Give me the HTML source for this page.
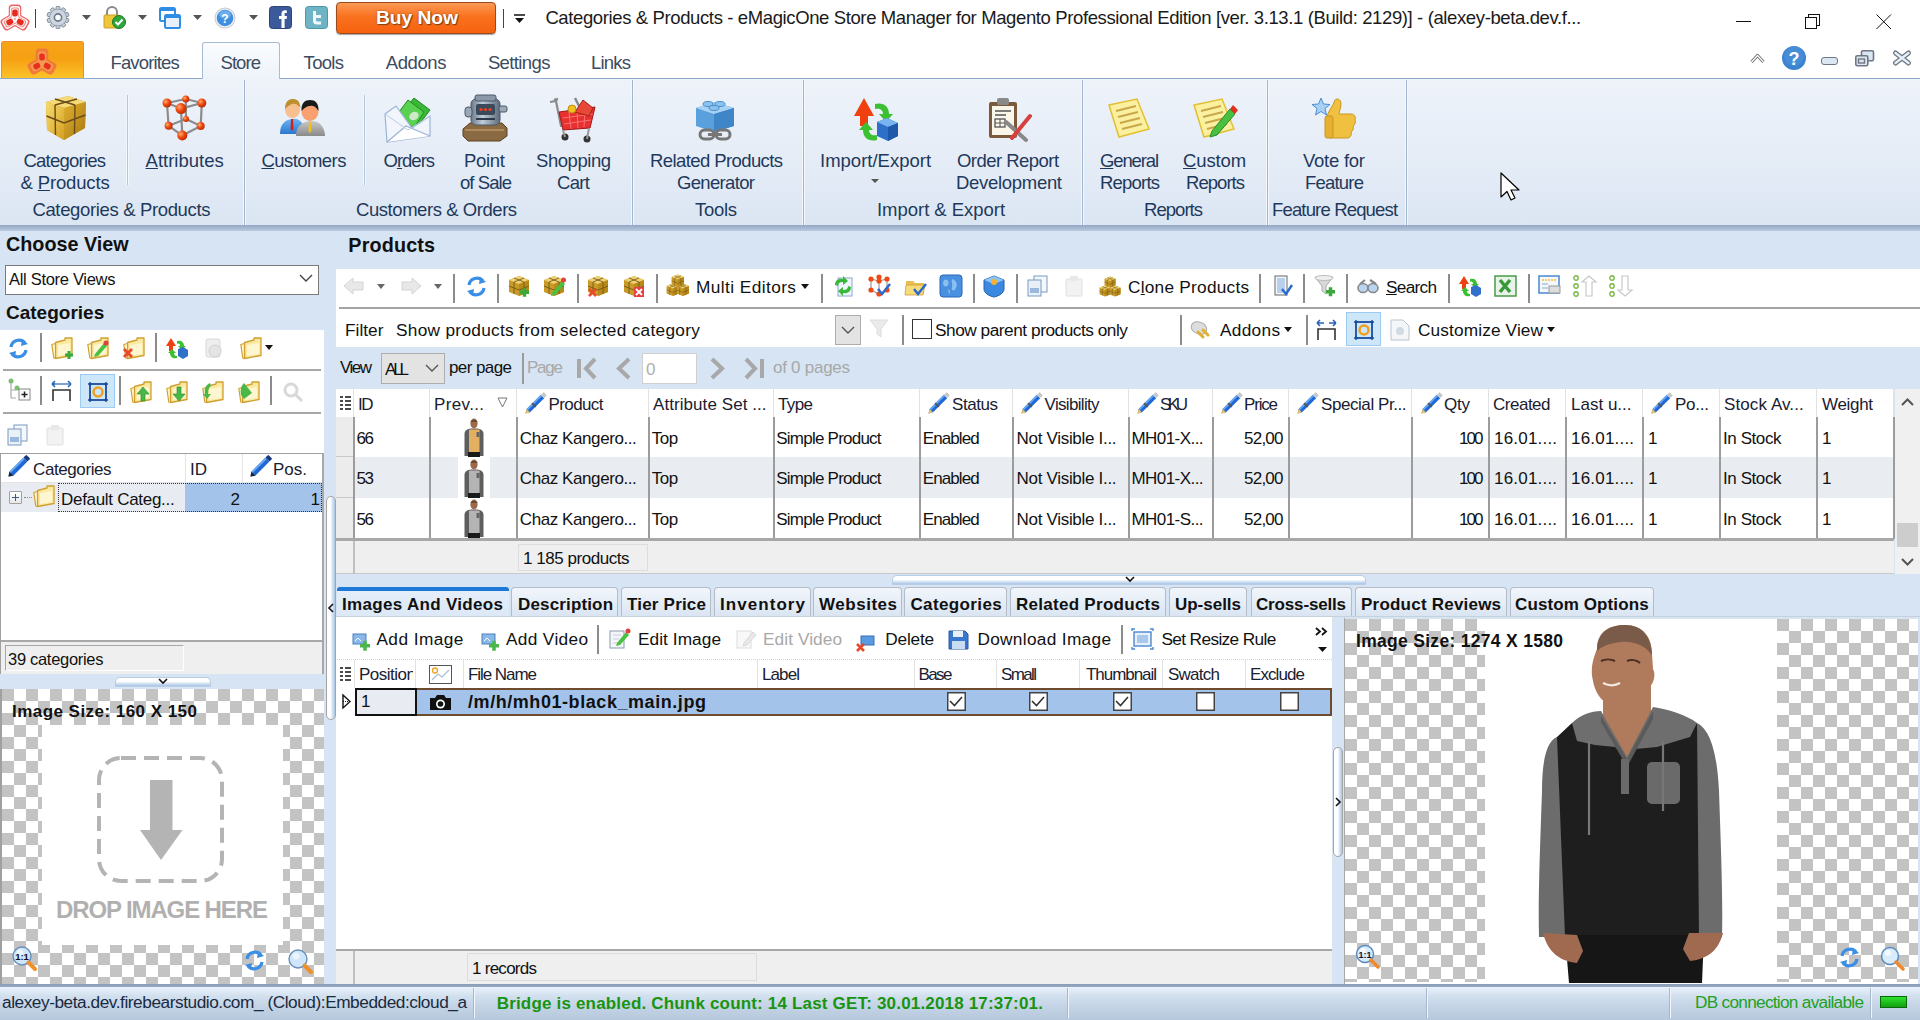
<!DOCTYPE html>
<html><head><meta charset="utf-8">
<style>
*{box-sizing:border-box;margin:0;padding:0}
html,body{width:1920px;height:1020px;overflow:hidden;background:#d6e4f3;font-family:"Liberation Sans",sans-serif;color:#000;position:relative}
.a{position:absolute}
.t{position:absolute;white-space:nowrap;line-height:1}
svg{position:absolute;overflow:visible}
.rt{color:#1e395b}

</style></head>
<body>

<!-- p01_title.py -->
<div class="a " style="left:0px;top:0px;width:1920px;height:40px;background:#fff"></div>
<svg style="left:0px;top:2px" width="30" height="30" viewBox="0 0 30 30"><g transform="translate(15,17)"><rect x="-6.25" y="-14.5" width="12.5" height="17.0" rx="3.5" fill="#ec6464" transform="rotate(0)"/><rect x="-6.25" y="-14.5" width="12.5" height="17.0" rx="3.5" fill="#ec6464" transform="rotate(120)"/><rect x="-6.25" y="-14.5" width="12.5" height="17.0" rx="3.5" fill="#ec6464" transform="rotate(240)"/><rect x="-5.1" y="-13" width="10.2" height="14.2" rx="3" fill="#fff" transform="rotate(0)"/><rect x="-5.1" y="-13" width="10.2" height="14.2" rx="3" fill="#fff" transform="rotate(120)"/><rect x="-5.1" y="-13" width="10.2" height="14.2" rx="3" fill="#fff" transform="rotate(240)"/><rect x="-4.1" y="-11.6" width="8.2" height="11.799999999999999" rx="2.5" fill="#f08c8c" transform="rotate(0)"/><rect x="-4.1" y="-11.6" width="8.2" height="11.799999999999999" rx="2.5" fill="#f08c8c" transform="rotate(120)"/><rect x="-4.1" y="-11.6" width="8.2" height="11.799999999999999" rx="2.5" fill="#f08c8c" transform="rotate(240)"/><rect x="-3.3" y="-10.4" width="6.6" height="9.6" rx="2" fill="#fff" transform="rotate(0)"/><rect x="-3.3" y="-10.4" width="6.6" height="9.6" rx="2" fill="#fff" transform="rotate(120)"/><rect x="-3.3" y="-10.4" width="6.6" height="9.6" rx="2" fill="#fff" transform="rotate(240)"/><rect x="-2.8" y="-9.5" width="5.6" height="6.9" rx="2" fill="#e62a1e" transform="rotate(0)"/><rect x="-2.8" y="-9.5" width="5.6" height="6.9" rx="2" fill="#e62a1e" transform="rotate(120)"/><rect x="-2.8" y="-9.5" width="5.6" height="6.9" rx="2" fill="#e62a1e" transform="rotate(240)"/></g></svg>
<div class="a " style="left:35px;top:9px;width:1px;height:19px;background:#444"></div>
<svg style="left:47px;top:6px" width="22" height="23" viewBox="0 0 22 23"><g transform="translate(11,11.5)"><g fill="#c4ced8" stroke="#7d8a98" stroke-width="0.9"><rect x="-2" y="-11" width="4" height="5.5" rx="0.8" transform="rotate(0)"/><rect x="-2" y="-11" width="4" height="5.5" rx="0.8" transform="rotate(36)"/><rect x="-2" y="-11" width="4" height="5.5" rx="0.8" transform="rotate(72)"/><rect x="-2" y="-11" width="4" height="5.5" rx="0.8" transform="rotate(108)"/><rect x="-2" y="-11" width="4" height="5.5" rx="0.8" transform="rotate(144)"/><rect x="-2" y="-11" width="4" height="5.5" rx="0.8" transform="rotate(180)"/><rect x="-2" y="-11" width="4" height="5.5" rx="0.8" transform="rotate(216)"/><rect x="-2" y="-11" width="4" height="5.5" rx="0.8" transform="rotate(252)"/><rect x="-2" y="-11" width="4" height="5.5" rx="0.8" transform="rotate(288)"/><rect x="-2" y="-11" width="4" height="5.5" rx="0.8" transform="rotate(324)"/><circle r="8.2"/></g><circle r="8" fill="#cdd6e0"/><circle r="3.6" fill="#fff" stroke="#6a7888" stroke-width="1.6"/></g></svg>
<svg style="left:82px;top:15px" width="9" height="5" viewBox="0 0 9 5"><path d="M0 0H9L4.5 5Z" fill="#555"/></svg>
<svg style="left:103px;top:6px" width="23" height="23" viewBox="0 0 23 23"><path d="M4 9V6a5 5 0 0 1 10 0v3" fill="none" stroke="#8a8a8a" stroke-width="2"/><rect x="1" y="9" width="15" height="13" rx="1" fill="#f0c53a" stroke="#caa02a"/><circle cx="16" cy="16" r="6.5" fill="#2fa63a" stroke="#1d7a26"/><path d="M12.5 16l2.5 2.5 4.5-5" fill="none" stroke="#fff" stroke-width="2"/></svg>
<svg style="left:138px;top:15px" width="9" height="5" viewBox="0 0 9 5"><path d="M0 0H9L4.5 5Z" fill="#555"/></svg>
<svg style="left:159px;top:7px" width="22" height="22" viewBox="0 0 22 22"><rect x="1" y="1" width="15" height="13" rx="1.5" fill="#fff" stroke="#2f8de4" stroke-width="2"/><rect x="1" y="1" width="15" height="3" fill="#2f8de4"/><rect x="6" y="8" width="15" height="13" rx="1.5" fill="#e8f1fb" stroke="#2f8de4" stroke-width="2"/><rect x="6" y="8" width="15" height="3" fill="#2f8de4"/></svg>
<svg style="left:193px;top:15px" width="9" height="5" viewBox="0 0 9 5"><path d="M0 0H9L4.5 5Z" fill="#555"/></svg>
<svg style="left:214px;top:7px" width="22" height="22" viewBox="0 0 22 22"><circle cx="11" cy="11" r="10.5" fill="#c8ccd2"/><circle cx="11" cy="11" r="9.5" fill="#eef0f2"/><circle cx="11" cy="11" r="8.3" fill="#3f8ee0"/><ellipse cx="11" cy="7.5" rx="6" ry="4" fill="#8cc0f4" opacity="0.6"/><text x="11" y="15.5" font-size="12" font-weight="bold" fill="#fff" text-anchor="middle" font-family="Liberation Sans">?</text></svg>
<svg style="left:249px;top:15px" width="9" height="5" viewBox="0 0 9 5"><path d="M0 0H9L4.5 5Z" fill="#555"/></svg>
<svg style="left:269px;top:6px" width="23" height="23" viewBox="0 0 23 23"><rect x="0.5" y="0.5" width="22" height="22" rx="3" fill="#3b5a9a" stroke="#2c4477"/><path d="M12.5 22V13H10V10H12.5V7.8C12.5 5.5 13.8 4.3 15.9 4.3C16.9 4.3 17.6 4.4 17.8 4.4V7H16.3C15.3 7 15.6 7.6 15.6 8.3V10H18L17.6 13H15.6V22Z" fill="#fff"/></svg>
<svg style="left:305px;top:6px" width="23" height="23" viewBox="0 0 23 23"><rect x="0.5" y="0.5" width="22" height="22" rx="3" fill="#6fb4c4" stroke="#4d98a8"/><path d="M8 5V15C8 17.5 9.5 18.5 12 18.5H16V15.5H12C11.3 15.5 11 15 11 14.3V12H16V9H11V5Z" fill="#fff" opacity="0.9"/></svg>
<div class="a " style="left:336px;top:2px;width:160px;height:32px;background:linear-gradient(#fb9a55,#f9721f 45%,#f6620f);border:1px solid #9a4a1c;border-radius:4px;box-shadow:0 1px 1px rgba(0,0,0,0.35)"></div>
<div class="t " style="left:376.0px;top:8.2px;font-size:19.25px;font-weight:bold;color:#fff;letter-spacing:-0.06px;text-shadow:0 0 2px #9a4a10,1px 1px 1px #7a3a10;">Buy Now</div>
<div class="a " style="left:503px;top:9px;width:1px;height:19px;background:#444"></div>
<svg style="left:514px;top:15px" width="11" height="8" viewBox="0 0 11 8"><path d="M0 0H11" stroke="#111" stroke-width="1.5"/><path d="M1 3H10L5.5 8Z" fill="#111"/></svg>
<div class="t " style="left:545.4px;top:9.3px;font-size:18.50px;color:#1a1a1a;letter-spacing:-0.38px;">Categories &amp; Products - eMagicOne Store Manager for Magento Professional Edition [ver. 3.13.1 (Build: 2129)] - (alexey-beta.dev.f...</div>
<div class="a " style="left:1736px;top:21px;width:15px;height:1px;background:#111"></div>
<svg style="left:1805px;top:14px" width="16" height="16" viewBox="0 0 16 16"><rect x="3.5" y="0.5" width="11" height="11" fill="none" stroke="#111"/><rect x="0.5" y="3.5" width="11" height="11" fill="#fff" stroke="#111"/></svg>
<svg style="left:1876px;top:14px" width="16" height="16" viewBox="0 0 16 16"><path d="M0.5 0.5L15 15M15 0.5L0.5 15" stroke="#111" stroke-width="1"/></svg>

<!-- p02_tabs.py -->
<div class="a " style="left:0px;top:40px;width:1920px;height:39px;background:#fff"></div>
<div class="a " style="left:1px;top:41px;width:83px;height:38px;background:linear-gradient(#f7a31a,#f6a012 45%,#fcc52a);border:1px solid #f08a2a;border-bottom:none;border-radius:3px 3px 0 0"></div>
<svg style="left:27px;top:46px" width="30" height="30" viewBox="0 0 30 30"><g transform="translate(15,17)"><rect x="-6.25" y="-14.5" width="12.5" height="17.0" rx="3.5" fill="#f07a3a" transform="rotate(0)"/><rect x="-6.25" y="-14.5" width="12.5" height="17.0" rx="3.5" fill="#f07a3a" transform="rotate(120)"/><rect x="-6.25" y="-14.5" width="12.5" height="17.0" rx="3.5" fill="#f07a3a" transform="rotate(240)"/><rect x="-4.1" y="-11.6" width="8.2" height="11.799999999999999" rx="2.5" fill="#f59a50" transform="rotate(0)"/><rect x="-4.1" y="-11.6" width="8.2" height="11.799999999999999" rx="2.5" fill="#f59a50" transform="rotate(120)"/><rect x="-4.1" y="-11.6" width="8.2" height="11.799999999999999" rx="2.5" fill="#f59a50" transform="rotate(240)"/><rect x="-2.8" y="-9.5" width="5.6" height="6.9" rx="2" fill="#e8301e" transform="rotate(0)"/><rect x="-2.8" y="-9.5" width="5.6" height="6.9" rx="2" fill="#e8301e" transform="rotate(120)"/><rect x="-2.8" y="-9.5" width="5.6" height="6.9" rx="2" fill="#e8301e" transform="rotate(240)"/></g></svg>
<div class="a " style="left:0px;top:78px;width:1920px;height:1px;background:#8fa9cc"></div>
<div class="a " style="left:202px;top:42px;width:78px;height:37px;background:linear-gradient(#fafcfe,#eef3fa);border:1px solid #a8bcd6;border-bottom:none;border-radius:3px 3px 0 0"></div>
<div class="t " style="left:110.5px;top:54.3px;font-size:18.50px;color:#3c4b5f;letter-spacing:-0.86px;">Favorites</div>
<div class="t " style="left:220.5px;top:54.3px;font-size:18.50px;color:#3c4b5f;letter-spacing:-0.93px;">Store</div>
<div class="t " style="left:303.6px;top:54.3px;font-size:18.50px;color:#3c4b5f;letter-spacing:-0.69px;">Tools</div>
<div class="t " style="left:385.7px;top:54.3px;font-size:18.50px;color:#3c4b5f;letter-spacing:-0.38px;">Addons</div>
<div class="t " style="left:487.9px;top:54.3px;font-size:18.50px;color:#3c4b5f;letter-spacing:-0.62px;">Settings</div>
<div class="t " style="left:591.0px;top:54.3px;font-size:18.50px;color:#3c4b5f;letter-spacing:-0.79px;">Links</div>
<svg style="left:1750px;top:52px" width="15" height="12" viewBox="0 0 15 12"><path d="M1.5 10L7.5 3.5L13.5 10" fill="none" stroke="#6b6b6b" stroke-width="3.2" stroke-linejoin="round"/><path d="M1.5 10L7.5 3.5L13.5 10" fill="none" stroke="#fff" stroke-width="1.2" stroke-linejoin="round"/></svg>
<svg style="left:1782px;top:46px" width="24" height="24" viewBox="0 0 24 24"><circle cx="12" cy="12" r="12" fill="#3b82cf"/><circle cx="12" cy="10" r="10" fill="#4f95dc" opacity="0.6"/><text x="12" y="19" font-size="18" font-weight="bold" fill="#fff" text-anchor="middle" font-family="Liberation Sans">?</text></svg>
<div class="a " style="left:1821px;top:57px;width:17px;height:8px;background:#dbe6f3;border:1.5px solid #6f7782;border-radius:3px"></div>
<svg style="left:1855px;top:50px" width="20" height="17" viewBox="0 0 20 17"><rect x="6.5" y="0.8" width="12" height="10" rx="1.5" fill="#dbe6f3" stroke="#6f7782" stroke-width="1.6"/><rect x="0.8" y="5.8" width="12" height="10" rx="1.5" fill="#dbe6f3" stroke="#6f7782" stroke-width="1.6"/><rect x="3.5" y="9" width="6" height="4" fill="none" stroke="#6f7782" stroke-width="1.4"/></svg>
<svg style="left:1893px;top:51px" width="18" height="14" viewBox="0 0 18 14"><path d="M2.5 2L15.5 12M15.5 2L2.5 12" stroke="#6f7782" stroke-width="5" stroke-linecap="round"/><path d="M2.5 2L15.5 12M15.5 2L2.5 12" stroke="#e6eef7" stroke-width="2.4" stroke-linecap="round"/></svg>

<!-- p03_ribbon.py -->
<div class="a " style="left:0px;top:79px;width:1920px;height:146px;background:linear-gradient(#eef3fa,#e6edf7 50%,#dbe6f3)"></div>
<div class="a " style="left:0px;top:225px;width:1920px;height:6px;background:linear-gradient(#93a7c3,#b9cadf)"></div>
<div class="a " style="left:243px;top:80px;width:3px;height:145px;background:linear-gradient(90deg,#f4f8fc 0,#f4f8fc 1px,#a3b5cd 1px,#a3b5cd 2px,#f4f8fc 2px)"></div>
<div class="a " style="left:631px;top:80px;width:3px;height:145px;background:linear-gradient(90deg,#f4f8fc 0,#f4f8fc 1px,#a3b5cd 1px,#a3b5cd 2px,#f4f8fc 2px)"></div>
<div class="a " style="left:802px;top:80px;width:3px;height:145px;background:linear-gradient(90deg,#f4f8fc 0,#f4f8fc 1px,#a3b5cd 1px,#a3b5cd 2px,#f4f8fc 2px)"></div>
<div class="a " style="left:1081px;top:80px;width:3px;height:145px;background:linear-gradient(90deg,#f4f8fc 0,#f4f8fc 1px,#a3b5cd 1px,#a3b5cd 2px,#f4f8fc 2px)"></div>
<div class="a " style="left:1266px;top:80px;width:3px;height:145px;background:linear-gradient(90deg,#f4f8fc 0,#f4f8fc 1px,#a3b5cd 1px,#a3b5cd 2px,#f4f8fc 2px)"></div>
<div class="a " style="left:1405px;top:80px;width:3px;height:145px;background:linear-gradient(90deg,#f4f8fc 0,#f4f8fc 1px,#a3b5cd 1px,#a3b5cd 2px,#f4f8fc 2px)"></div>
<div class="a " style="left:126px;top:95px;width:3px;height:90px;background:linear-gradient(90deg,#f4f8fc 0,#f4f8fc 1px,#b6c6da 1px,#b6c6da 2px,#f4f8fc 2px)"></div>
<div class="a " style="left:363px;top:95px;width:3px;height:90px;background:linear-gradient(90deg,#f4f8fc 0,#f4f8fc 1px,#b6c6da 1px,#b6c6da 2px,#f4f8fc 2px)"></div>
<svg style="left:42px;top:94px" width="46" height="46" viewBox="0 0 46 46"><defs><linearGradient id="cg1" x1="0" y1="0" x2="1" y2="1"><stop offset="0" stop-color="#f8dc70"/><stop offset="1" stop-color="#d4a020"/></linearGradient><linearGradient id="cg2" x1="0" y1="0" x2="1" y2="1"><stop offset="0" stop-color="#e0b030"/><stop offset="1" stop-color="#a87810"/></linearGradient></defs><path d="M4 8L26 2L44 8L43 34L22 46L5 36Z" fill="#c89a1c"/><path d="M4 8L22 14L44 8L26 2Z" fill="#f6da78"/><path d="M4 8L22 14V46L5 36Z" fill="url(#cg1)"/><path d="M22 14L44 8L43 34L22 46Z" fill="url(#cg2)"/><path d="M13 5L33 11M35 5L13 11M13 11L13.5 41M33 11L32.5 40M4.5 22L22 29L43.5 21" stroke="#6a4c18" stroke-width="1.4" fill="none"/></svg>
<div class="t " style="left:23.5px;top:151.9px;font-size:18.50px;color:#1e395b;letter-spacing:-0.77px;">Categories</div>
<div class="t " style="left:20.6px;top:173.9px;font-size:18.50px;color:#1e395b;letter-spacing:-0.16px;">&amp; <u>P</u>roducts</div>
<svg style="left:161px;top:95px" width="46" height="46" viewBox="0 0 46 46"><defs><radialGradient id="ag" cx="0.35" cy="0.35" r="0.7"><stop offset="0" stop-color="#ffb070"/><stop offset="0.5" stop-color="#f04a12"/><stop offset="1" stop-color="#b82a00"/></radialGradient></defs><g stroke="#8c8c8c" stroke-width="2.2"><path d="M6 8L24.8 4"/><path d="M24.8 4L40.8 8"/><path d="M40.8 8L20 13.6"/><path d="M20 13.6L6 8"/><path d="M6 8L7.6 30.8"/><path d="M40.8 8L39.7 31"/><path d="M20 13.6L21.3 40.5"/><path d="M24.8 4L25 24"/><path d="M7.6 30.8L25 24"/><path d="M25 24L39.7 31"/><path d="M39.7 31L21.3 40.5"/><path d="M21.3 40.5L7.6 30.8"/></g><circle cx="24.8" cy="4" r="3.5" fill="url(#ag)"/><circle cx="25" cy="24" r="3" fill="url(#ag)"/><circle cx="6" cy="8" r="4.5" fill="url(#ag)"/><circle cx="40.8" cy="8" r="4.5" fill="url(#ag)"/><circle cx="7.6" cy="30.8" r="4" fill="url(#ag)"/><circle cx="39.7" cy="31" r="4" fill="url(#ag)"/><circle cx="20" cy="13.6" r="5.5" fill="url(#ag)"/><circle cx="21.3" cy="40.5" r="5" fill="url(#ag)"/></svg>
<div class="t " style="left:145.6px;top:151.9px;font-size:18.50px;color:#1e395b;letter-spacing:-0.01px;"><u>A</u>ttributes</div>
<svg style="left:280px;top:98px" width="46" height="46" viewBox="0 0 46 46"><defs><linearGradient id="cb1" x1="0" y1="0" x2="0" y2="1"><stop offset="0" stop-color="#6ab4f4"/><stop offset="1" stop-color="#2a78d0"/></linearGradient><linearGradient id="cb2" x1="0" y1="0" x2="0" y2="1"><stop offset="0" stop-color="#c8c8c8"/><stop offset="1" stop-color="#8a8a8a"/></linearGradient></defs><path d="M0 36C0 26 5 22 12 21S24 24 25 36Z" fill="url(#cb1)"/><path d="M11 21L13 21L13.5 31L12 33L10.5 31Z" fill="#d02020"/><ellipse cx="12.5" cy="12" rx="7.5" ry="8" fill="#f8c090"/><path d="M5 11C5 3 9 1 13 1S20 3 20.5 10C18 6 14 5 12 6C9 7 7 9 5 11Z" fill="#c09030"/><path d="M16 38C16 28 22 24 30 23S45 28 45 38Z" fill="url(#cb2)"/><path d="M29 24L31 24L31.5 33L30 35L28.5 33Z" fill="#f0c020"/><ellipse cx="30" cy="14" rx="8.5" ry="9" fill="#f8a070"/><path d="M21.5 13C21 5 25 2 30 2S39 5 38.5 13C36 8 32 7 30 8C27 8 24 10 21.5 13Z" fill="#1a1a1a"/></svg>
<div class="t " style="left:261.4px;top:151.9px;font-size:18.50px;color:#1e395b;letter-spacing:-0.55px;"><u>C</u>ustomers</div>
<svg style="left:384px;top:96px" width="46" height="46" viewBox="0 0 46 46"><path d="M16 18L30 2L46 14L34 30Z" fill="#3ab838" stroke="#1f8a1f"/><path d="M12 20L24 4L40 16L30 32Z" fill="#58d050" stroke="#1f8a1f"/><ellipse cx="30" cy="20" rx="5" ry="4" fill="#cfe8c8" transform="rotate(-35 30 20)"/><path d="M1 18L12 10L28 32L46 20L46 40L3 46Z" fill="#f2f6fc" stroke="#9ab4d8" stroke-width="1.2"/><path d="M3 46L22 30L46 40" fill="#fff" stroke="#9ab4d8" stroke-width="1.2"/><path d="M1 18L24 34L46 20" fill="none" stroke="#b8cce4"/></svg>
<div class="t " style="left:383.5px;top:151.9px;font-size:18.50px;color:#1e395b;letter-spacing:-1.00px;">O<u>r</u>ders</div>
<svg style="left:462px;top:94px" width="46" height="46" viewBox="0 0 46 46"><defs><linearGradient id="pg" x1="0" y1="0" x2="1" y2="0"><stop offset="0" stop-color="#6a7888"/><stop offset="0.4" stop-color="#c0ccd8"/><stop offset="1" stop-color="#5a6878"/></linearGradient></defs><path d="M1 35L8 29H40L45 34V42L38 47H6L1 42Z" fill="#8a6a42" stroke="#5a4020"/><path d="M3 36H42" stroke="#b08a5a" stroke-width="2"/><rect x="9" y="5" width="29" height="26" rx="5" fill="url(#pg)" stroke="#4a5868"/><rect x="13" y="1" width="21" height="6" rx="2" fill="#8a98a8" stroke="#4a5868"/><rect x="14" y="10" width="19" height="11" rx="2" fill="#3a4a5a"/><circle cx="19" cy="15.5" r="1.6" fill="#f04020"/><circle cx="23.5" cy="15.5" r="1.6" fill="#f04020"/><circle cx="28" cy="15.5" r="1.6" fill="#f04020"/><rect x="3" y="13" width="7" height="10" rx="3" fill="#9aa8b8" stroke="#4a5868"/><rect x="37" y="12" width="8" height="6" rx="2" fill="#9aa8b8" stroke="#4a5868"/><path d="M14 25H33" stroke="#2a3a4a" stroke-width="2"/></svg>
<div class="t " style="left:464.0px;top:151.9px;font-size:18.50px;color:#1e395b;letter-spacing:-0.29px;">Point</div>
<div class="t " style="left:460.0px;top:173.9px;font-size:18.50px;color:#1e395b;letter-spacing:-0.93px;">of Sale</div>
<svg style="left:549px;top:96px" width="46" height="46" viewBox="0 0 46 46"><path d="M1 6L7 5L12 30L40 30" fill="none" stroke="#8a8a8a" stroke-width="2.2"/><path d="M5 4L9 3M26 2L30 10" stroke="#8a8a8a" stroke-width="2.5"/><path d="M10 16L46 11L41 32L14 34Z" fill="#e83030" stroke="#a01818"/><path d="M14 22L44 18M15 28L42 24M20 16L22 33M28 14L29 32M36 13L35 31" stroke="#ff8080" stroke-width="0.8"/><path d="M26 16L34 4L44 12L40 20Z" fill="#e84838" stroke="#a82010"/><circle cx="23" cy="13" r="4" fill="#f0c020" stroke="#c09010"/><circle cx="16" cy="41" r="3.5" fill="#333"/><circle cx="38" cy="43" r="3.5" fill="#333"/><path d="M14 34L16 41M40 32L38 43" stroke="#999" stroke-width="2"/></svg>
<div class="t " style="left:536.0px;top:151.9px;font-size:18.50px;color:#1e395b;letter-spacing:-0.45px;">Shopping</div>
<div class="t " style="left:557.0px;top:173.9px;font-size:18.50px;color:#1e395b;letter-spacing:-0.65px;">Cart</div>
<svg style="left:692px;top:96px" width="46" height="46" viewBox="0 0 46 46"><path d="M4 12L22 6L42 12V30L22 36L4 30Z" fill="#5aa0dc"/><path d="M4 12L22 18L42 12L22 6Z" fill="#a8d2f4"/><path d="M22 18V36L42 30V12Z" fill="#3f86c8"/><ellipse cx="16" cy="8" rx="5" ry="2.5" fill="#8cc2ee" stroke="#4a90d0"/><ellipse cx="28" cy="8" rx="5" ry="2.5" fill="#8cc2ee" stroke="#4a90d0"/><ellipse cx="22" cy="12" rx="5" ry="2.5" fill="#8cc2ee" stroke="#4a90d0"/><rect x="8" y="34" width="14" height="9" rx="4.5" fill="none" stroke="#777" stroke-width="3"/><rect x="24" y="34" width="14" height="9" rx="4.5" fill="none" stroke="#777" stroke-width="3"/><path d="M16 38.5H30" stroke="#777" stroke-width="3"/></svg>
<div class="t " style="left:650.0px;top:151.9px;font-size:18.50px;color:#1e395b;letter-spacing:-0.59px;">Related Products</div>
<div class="t " style="left:677.0px;top:173.9px;font-size:18.50px;color:#1e395b;letter-spacing:-0.66px;">Generator</div>
<svg style="left:853px;top:96px" width="46" height="46" viewBox="0 0 46 46"><path d="M10 0L20 18H14V28H6V18H0Z" fill="#f04010" transform="translate(1,2)"/><path d="M22 8C30 6 36 10 36 18L40 18L33 26L26 18H30C30 14 27 12 22 13Z" fill="#3ac030"/><path d="M24 44C16 46 10 42 10 34L6 34L13 26L20 34H16C16 38 19 40 24 39Z" fill="#3ac030"/><path d="M24 26L34 22L45 27V40L35 45L24 40Z" fill="#2e6fc8"/><path d="M24 26L35 31L45 27L34 22Z" fill="#7ab4f0"/><path d="M35 31V45L45 40V27Z" fill="#1e58a8"/></svg>
<div class="t " style="left:820.0px;top:151.9px;font-size:18.50px;color:#1e395b;letter-spacing:0.00px;">Import/Export</div>
<svg style="left:871px;top:179px" width="8" height="4" viewBox="0 0 8 4"><path d="M0 0H8L4 4Z" fill="#555"/></svg>
<svg style="left:986px;top:96px" width="46" height="46" viewBox="0 0 46 46"><rect x="3" y="6" width="28" height="36" rx="2" fill="#7a5a3a"/><rect x="6" y="10" width="22" height="29" fill="#fbf6ea"/><rect x="11" y="2" width="12" height="7" rx="2" fill="#8a8a8a"/><path d="M9 15H25M9 19H20" stroke="#555" stroke-width="1.3"/><rect x="9" y="23" width="10" height="8" fill="none" stroke="#555" stroke-width="1.3"/><path d="M9 27H19M14 23V31" stroke="#555" stroke-width="1"/><path d="M20 26L40 44" stroke="#888" stroke-width="4" stroke-linecap="round"/><path d="M26 42L44 20" stroke="#d84040" stroke-width="4" stroke-linecap="round"/></svg>
<div class="t " style="left:957.0px;top:151.9px;font-size:18.50px;color:#1e395b;letter-spacing:-0.54px;">Order Report</div>
<div class="t " style="left:956.0px;top:173.9px;font-size:18.50px;color:#1e395b;letter-spacing:-0.30px;">Development</div>
<svg style="left:1107px;top:97px" width="46" height="46" viewBox="0 0 46 46"><path d="M2 8L30 2L42 32L12 40Z" fill="#fbf0a0" stroke="#e2c030" stroke-width="1.5"/><path d="M9 14L29 9M11 20L31 15M13 26L33 21M15 32L35 27" stroke="#c8a84a" stroke-width="2"/></svg>
<div class="t " style="left:1100.0px;top:151.9px;font-size:18.50px;color:#1e395b;letter-spacing:-1.13px;"><u>G</u>eneral</div>
<div class="t " style="left:1100.0px;top:173.9px;font-size:18.50px;color:#1e395b;letter-spacing:-0.79px;">Reports</div>
<svg style="left:1192px;top:97px" width="46" height="46" viewBox="0 0 46 46"><path d="M2 8L30 2L42 32L12 40Z" fill="#fbf0a0" stroke="#e2c030" stroke-width="1.5"/><path d="M9 14L29 9M11 20L31 15M13 26L33 21M15 32L35 27" stroke="#c8a84a" stroke-width="2"/><path d="M20 34L38 12L43 17L25 38L18 40Z" fill="#4ac040" stroke="#2a8a2a"/><path d="M38 12L41 8L46 13L43 17Z" fill="#e03020"/></svg>
<div class="t " style="left:1183.0px;top:151.9px;font-size:18.50px;color:#1e395b;letter-spacing:-0.14px;"><u>C</u>ustom</div>
<div class="t " style="left:1186.0px;top:173.9px;font-size:18.50px;color:#1e395b;letter-spacing:-0.96px;">Reports</div>
<svg style="left:1311px;top:96px" width="46" height="46" viewBox="0 0 46 46"><path d="M16 20C18 14 22 10 24 4C26 2 30 3 30 8C30 12 28 16 28 18H40C44 18 45 22 44 24C45 26 44 29 42 30C43 32 42 35 40 36C41 38 40 41 37 42H20C17 42 16 40 16 38Z" fill="#f0c040" stroke="#c89820"/><rect x="14" y="20" width="8" height="22" rx="2" fill="#e8b030" stroke="#c89820"/><path d="M10 2L12.5 8L19 8.5L14 12.5L15.5 19L10 15.5L4.5 19L6 12.5L1 8.5L7.5 8Z" fill="#a8d0f4" stroke="#4a90d0"/></svg>
<div class="t " style="left:1303.0px;top:151.9px;font-size:18.50px;color:#1e395b;letter-spacing:-0.25px;">Vote for</div>
<div class="t " style="left:1305.0px;top:173.9px;font-size:18.50px;color:#1e395b;letter-spacing:-0.79px;">Feature</div>
<div class="t " style="left:32.4px;top:201.3px;font-size:18.50px;color:#1e395b;letter-spacing:-0.35px;">Categories &amp; Products</div>
<div class="t " style="left:356.0px;top:201.3px;font-size:18.50px;color:#1e395b;letter-spacing:-0.44px;">Customers &amp; Orders</div>
<div class="t " style="left:695.0px;top:201.3px;font-size:18.50px;color:#1e395b;letter-spacing:-0.29px;">Tools</div>
<div class="t " style="left:877.0px;top:201.3px;font-size:18.50px;color:#1e395b;letter-spacing:-0.03px;">Import &amp; Export</div>
<div class="t " style="left:1144.0px;top:201.3px;font-size:18.50px;color:#1e395b;letter-spacing:-0.96px;">Reports</div>
<div class="t " style="left:1272.0px;top:201.3px;font-size:18.50px;color:#1e395b;letter-spacing:-0.84px;">Feature Request</div>
<svg style="left:1500px;top:172px" width="20" height="30" viewBox="0 0 20 30"><path d="M1 1V25L7 19.5L11 28L15 26L11 18H19Z" fill="#fff" stroke="#000" stroke-width="1.2" stroke-linejoin="round"/></svg>

<!-- p04_left.py -->
<div class="t " style="left:6.0px;top:235.3px;font-size:19.75px;font-weight:bold;color:#111;">Choose View</div>
<div class="a " style="left:5px;top:265px;width:314px;height:30px;background:#fff;border:1px solid #7a7a7a"></div>
<div class="t " style="left:9.0px;top:270.5px;font-size:16.50px;color:#111;letter-spacing:-0.30px;">All Store Views</div>
<svg style="left:299px;top:274px" width="14" height="8" viewBox="0 0 14 8"><path d="M1 1L7 7L13 1" fill="none" stroke="#444" stroke-width="1.4"/></svg>
<div class="t " style="left:6.0px;top:302.9px;font-size:19.00px;font-weight:bold;color:#111;">Categories</div>
<div class="a " style="left:0px;top:330px;width:324px;height:124px;background:#fff"></div>
<div class="a " style="left:3px;top:369px;width:318px;height:2px;background:#a8a8a8"></div>
<div class="a " style="left:3px;top:412px;width:318px;height:2px;background:#a8a8a8"></div>
<div class="a " style="left:40px;top:333px;width:2px;height:29px;background:#8a8a8a"></div>
<div class="a " style="left:155px;top:333px;width:2px;height:29px;background:#8a8a8a"></div>
<div class="a " style="left:40px;top:376px;width:2px;height:29px;background:#8a8a8a"></div>
<div class="a " style="left:119px;top:376px;width:2px;height:29px;background:#8a8a8a"></div>
<div class="a " style="left:270px;top:376px;width:2px;height:29px;background:#8a8a8a"></div>
<svg style="left:7px;top:337px" width="22" height="22" viewBox="0 0 22 22"><path d="M4 10A8 8 0 0 1 18 6" fill="none" stroke="#3a8ee6" stroke-width="3.2"/><path d="M15 2L21 7L14 9Z" fill="#3a8ee6"/><path d="M19 13A8 8 0 0 1 5 17" fill="none" stroke="#3a8ee6" stroke-width="3.2"/><path d="M8 21L2 16L9 14Z" fill="#3a8ee6"/></svg>
<svg style="left:51px;top:337px" width="22" height="22" viewBox="0 0 22 22"><path d="M4.5 5.5L14 3V1H21V18.5L4.5 21.5Z" fill="#fbe9a0" stroke="#d0a030" stroke-width="1.3" stroke-linejoin="round"/><path d="M7 8L19 6V17L7 19Z" fill="#fdf6d0"/><path d="M0.8 7.5L4.5 6.5V21.5L2.8 21Z" fill="#fff6d0" stroke="#d0a030" stroke-width="1.2" stroke-linejoin="round"/><rect x="14" y="16.5" width="8" height="3" fill="#3aa83a"/><rect x="16.5" y="14" width="3" height="8" fill="#3aa83a"/></svg>
<svg style="left:87px;top:337px" width="22" height="22" viewBox="0 0 22 22"><path d="M4.5 5.5L14 3V1H21V18.5L4.5 21.5Z" fill="#fbe9a0" stroke="#d0a030" stroke-width="1.3" stroke-linejoin="round"/><path d="M7 8L19 6V17L7 19Z" fill="#fdf6d0"/><path d="M0.8 7.5L4.5 6.5V21.5L2.8 21Z" fill="#fff6d0" stroke="#d0a030" stroke-width="1.2" stroke-linejoin="round"/><path d="M8 17L17 6L20 9L11 19L7 20Z" fill="#4ac040"/><circle cx="19" cy="6" r="2.5" fill="#e04040"/></svg>
<svg style="left:123px;top:337px" width="22" height="22" viewBox="0 0 22 22"><path d="M4.5 5.5L14 3V1H21V18.5L4.5 21.5Z" fill="#fbe9a0" stroke="#d0a030" stroke-width="1.3" stroke-linejoin="round"/><path d="M7 8L19 6V17L7 19Z" fill="#fdf6d0"/><path d="M0.8 7.5L4.5 6.5V21.5L2.8 21Z" fill="#fff6d0" stroke="#d0a030" stroke-width="1.2" stroke-linejoin="round"/><path d="M1 12L9 20M9 12L1 20" stroke="#e84a2a" stroke-width="3"/></svg>
<svg style="left:166px;top:337px" width="22" height="22" viewBox="0 0 22 22"><path d="M5 1L10 9H7V14H3V9H0Z" fill="#f04010"/><path d="M11 4C15 3 18 5 18 9L20 9L16 13L12 9H14C14 7 13 6 11 7Z" fill="#3ac030"/><path d="M11 21C7 22 4 20 4 16L2 16L6 12L10 16H8C8 18 9 19 11 19Z" fill="#3ac030"/><path d="M12 12L17 10L22 13V19L17 22L12 19Z" fill="#3070c8"/></svg>
<svg style="left:202px;top:337px" width="22" height="22" viewBox="0 0 22 22"><rect x="4" y="2" width="14" height="18" rx="2" fill="#eee" stroke="#d8d8d8"/><circle cx="13" cy="14" r="6" fill="#e4e4e4" stroke="#d0d0d0"/></svg>
<svg style="left:240px;top:337px" width="22" height="22" viewBox="0 0 22 22"><path d="M4.5 5.5L14 3V1H21V18.5L4.5 21.5Z" fill="#fbe9a0" stroke="#d0a030" stroke-width="1.3" stroke-linejoin="round"/><path d="M7 8L19 6V17L7 19Z" fill="#fdf6d0"/><path d="M0.8 7.5L4.5 6.5V21.5L2.8 21Z" fill="#fff6d0" stroke="#d0a030" stroke-width="1.2" stroke-linejoin="round"/></svg>
<svg style="left:265px;top:345px" width="8" height="5" viewBox="0 0 8 5"><path d="M0 0H8L4 5Z" fill="#111"/></svg>
<svg style="left:8px;top:378px" width="22" height="24" viewBox="0 0 22 24"><circle cx="3" cy="3" r="2.5" fill="#7ac070"/><path d="M3 5V20M3 12H8M3 20H8" stroke="#aaa" stroke-width="1.2"/><circle cx="9" cy="10" r="2.5" fill="#7ac070"/><rect x="11" y="11" width="11" height="11" fill="#fafafa" stroke="#888"/><path d="M13.5 16.5H19.5M16.5 13.5V19.5" stroke="#222" stroke-width="1.5"/></svg>
<svg style="left:51px;top:380px" width="21" height="22" viewBox="0 0 21 22"><path d="M1 4H20" stroke="#2a64b8" stroke-width="1.2" stroke-dasharray="0"/><path d="M4 4L1 4M1 4L4 1M1 4L4 7M20 4L17 1M20 4L17 7" stroke="#2a64b8" stroke-width="1.6" fill="none"/><path d="M2 21V10H19V21" fill="none" stroke="#333" stroke-width="1.6"/></svg>
<div class="a " style="left:80px;top:374px;width:35px;height:34px;background:#cde6f8;border:1px solid #9ccaf0"></div>
<svg style="left:88px;top:382px" width="20" height="20" viewBox="0 0 20 20"><rect x="2" y="2" width="16" height="16" fill="none" stroke="#1a4ca0" stroke-width="1.8"/><path d="M0 2H4M2 0V4M16 2H20M18 0V4M0 18H4M2 16V20M16 18H20M18 16V20" stroke="#1a4ca0" stroke-width="1.4"/><circle cx="10" cy="10" r="4.5" fill="none" stroke="#f0a020" stroke-width="2.5"/></svg>
<svg style="left:130px;top:381px" width="22" height="22" viewBox="0 0 22 22"><path d="M4.5 5.5L14 3V1H21V18.5L4.5 21.5Z" fill="#fbe9a0" stroke="#d0a030" stroke-width="1.3" stroke-linejoin="round"/><path d="M7 8L19 6V17L7 19Z" fill="#fdf6d0"/><path d="M0.8 7.5L4.5 6.5V21.5L2.8 21Z" fill="#fff6d0" stroke="#d0a030" stroke-width="1.2" stroke-linejoin="round"/><path d="M11 20V13H7L13 6L19 13H15V20Z" fill="#48b848" stroke="#2a8a2a" stroke-width="0.6"/></svg>
<svg style="left:166px;top:381px" width="22" height="22" viewBox="0 0 22 22"><path d="M4.5 5.5L14 3V1H21V18.5L4.5 21.5Z" fill="#fbe9a0" stroke="#d0a030" stroke-width="1.3" stroke-linejoin="round"/><path d="M7 8L19 6V17L7 19Z" fill="#fdf6d0"/><path d="M0.8 7.5L4.5 6.5V21.5L2.8 21Z" fill="#fff6d0" stroke="#d0a030" stroke-width="1.2" stroke-linejoin="round"/><path d="M11 6V13H7L13 20L19 13H15V6Z" fill="#48b848" stroke="#2a8a2a" stroke-width="0.6"/></svg>
<svg style="left:202px;top:381px" width="22" height="22" viewBox="0 0 22 22"><path d="M4.5 5.5L14 3V1H21V18.5L4.5 21.5Z" fill="#fbe9a0" stroke="#d0a030" stroke-width="1.3" stroke-linejoin="round"/><path d="M7 8L19 6V17L7 19Z" fill="#fdf6d0"/><path d="M0.8 7.5L4.5 6.5V21.5L2.8 21Z" fill="#fff6d0" stroke="#d0a030" stroke-width="1.2" stroke-linejoin="round"/><path d="M8 2C4 4 2 8 3 13L1 13L5 18L9 13H6C6 9 7 6 9 5Z" fill="#48b848"/></svg>
<svg style="left:238px;top:381px" width="22" height="22" viewBox="0 0 22 22"><path d="M4.5 5.5L14 3V1H21V18.5L4.5 21.5Z" fill="#fbe9a0" stroke="#d0a030" stroke-width="1.3" stroke-linejoin="round"/><path d="M7 8L19 6V17L7 19Z" fill="#fdf6d0"/><path d="M0.8 7.5L4.5 6.5V21.5L2.8 21Z" fill="#fff6d0" stroke="#d0a030" stroke-width="1.2" stroke-linejoin="round"/><path d="M6 2C3 5 2 9 3 14L6 18L14 12Z" fill="#48b848"/></svg>
<svg style="left:282px;top:381px" width="22" height="22" viewBox="0 0 22 22"><circle cx="9" cy="9" r="6" fill="none" stroke="#d8d8d8" stroke-width="3"/><path d="M13 13L20 20" stroke="#d8d8d8" stroke-width="3"/></svg>
<svg style="left:7px;top:424px" width="22" height="22" viewBox="0 0 22 22"><rect x="7" y="1" width="13" height="16" fill="#f4f8fc" stroke="#7a9ac0"/><rect x="1" y="5" width="13" height="16" fill="#e8f0f8" stroke="#7a9ac0"/><rect x="3" y="13" width="9" height="5" fill="#9ab8dc"/></svg>
<svg style="left:45px;top:424px" width="21" height="22" viewBox="0 0 21 22"><rect x="2" y="4" width="16" height="17" rx="1" fill="#f2f2f2" stroke="#e0e0e0"/><rect x="6" y="1" width="8" height="5" fill="#e8e8e8"/></svg>
<div class="a " style="left:0px;top:453px;width:324px;height:221px;background:#fff;border:1px solid #a0a0a0;border-left-width:1px;border-right:2px solid #a8a8a8"></div>
<div class="a " style="left:1px;top:454px;width:321px;height:29px;background:#fff;border-bottom:1px solid #e4e4e4"></div>
<div class="a " style="left:185px;top:454px;width:1px;height:29px;background:#e4e4e4"></div>
<div class="a " style="left:242px;top:454px;width:1px;height:29px;background:#e4e4e4"></div>
<svg style="left:7px;top:457px" width="21" height="21" viewBox="0 0 21 21"><g transform="translate(1.5,19.5) rotate(-45)"><path d="M0 0L4 -2.8H24V2.8H4Z" fill="#1f68d8"/><path d="M4 -2.8H24V-0.8H4Z" fill="#6aa8f0"/><path d="M0 0L4 -2.8V2.8Z" fill="#222"/><rect x="24" y="-2.8" width="4" height="5.6" rx="1" fill="#1a3a80"/></g></svg>
<div class="t " style="left:33.0px;top:461.1px;font-size:17.00px;color:#1a2030;letter-spacing:-0.40px;">Categories</div>
<div class="t " style="left:190.0px;top:461.1px;font-size:17.00px;color:#1a2030;">ID</div>
<svg style="left:249px;top:457px" width="21" height="21" viewBox="0 0 21 21"><g transform="translate(1.5,19.5) rotate(-45)"><path d="M0 0L4 -2.8H24V2.8H4Z" fill="#1f68d8"/><path d="M4 -2.8H24V-0.8H4Z" fill="#6aa8f0"/><path d="M0 0L4 -2.8V2.8Z" fill="#222"/><rect x="24" y="-2.8" width="4" height="5.6" rx="1" fill="#1a3a80"/></g></svg>
<div class="t " style="left:273.0px;top:461.1px;font-size:17.00px;color:#1a2030;">Pos.</div>
<div class="a " style="left:1px;top:483px;width:184px;height:29px;background:#e8ecf2"></div>
<div class="a " style="left:185px;top:483px;width:137px;height:29px;background:#a4c3ea"></div>
<div class="a " style="left:58px;top:483px;width:264px;height:29px;border:1.5px dotted #333"></div>
<div class="a " style="left:9px;top:491px;width:13px;height:13px;background:linear-gradient(#fff,#e8e8e8);border:1px solid #a0a0a0;border-radius:1px"></div>
<div class="a " style="left:12px;top:497px;width:7px;height:1.2px;background:#3a5a90"></div>
<div class="a " style="left:14.9px;top:494px;width:1.2px;height:7px;background:#3a5a90"></div>
<div class="a " style="left:24px;top:497px;width:8px;height:1px;border-top:1px dotted #888"></div>
<svg style="left:33px;top:485px" width="22" height="22" viewBox="0 0 22 22"><path d="M4.5 5.5L14 3V1H21V18.5L4.5 21.5Z" fill="#fbe9a0" stroke="#d0a030" stroke-width="1.3" stroke-linejoin="round"/><path d="M7 8L19 6V17L7 19Z" fill="#fdf6d0"/><path d="M0.8 7.5L4.5 6.5V21.5L2.8 21Z" fill="#fff6d0" stroke="#d0a030" stroke-width="1.2" stroke-linejoin="round"/></svg>
<div class="t " style="left:61.0px;top:491.1px;font-size:17.00px;color:#111;letter-spacing:-0.30px;">Default Categ...</div>
<div class="t " style="left:210.0px;top:491.1px;width:30px;text-align:right;font-size:17.00px;color:#111;">2</div>
<div class="t " style="left:290.0px;top:491.1px;width:30px;text-align:right;font-size:17.00px;color:#111;">1</div>
<div class="a " style="left:1px;top:640px;width:321px;height:34px;background:#efefef;border-top:2px solid #a8a8a8"></div>
<div class="a " style="left:5px;top:645px;width:179px;height:26px;border-left:1px solid #a8a8a8;border-top:1px solid #a8a8a8;border-right:1px solid #fff;border-bottom:1px solid #fff"></div>
<div class="t " style="left:8.0px;top:651.0px;font-size:16.50px;color:#111;letter-spacing:-0.30px;">39 categories</div>
<div class="a " style="left:0px;top:674px;width:324px;height:15px;background:#d6e4f3"></div>
<div class="a " style="left:115px;top:677px;width:96px;height:10px;background:linear-gradient(#fff,#fff 40%,#a8c4e4);border-radius:5px 5px 0 0;border:1px solid #b8cce4"></div>
<svg style="left:158px;top:678px" width="10" height="6" viewBox="0 0 10 6"><path d="M1 1L5 5L9 1" fill="none" stroke="#111" stroke-width="1.6"/></svg>
<div class="a " style="left:2px;top:689px;width:322px;height:294.5px;background-color:#fff;background-image:linear-gradient(45deg,#c3c3c3 25%,transparent 25%,transparent 75%,#c3c3c3 75%),linear-gradient(45deg,#c3c3c3 25%,transparent 25%,transparent 75%,#c3c3c3 75%);background-size:24px 24px;background-position:12px 0,24px 12px"></div>
<div class="a " style="left:0px;top:689px;width:2px;height:296px;background:#a0a0a0"></div>
<div class="a " style="left:42px;top:725px;width:241px;height:220px;background:#fff"></div>
<div class="t " style="left:12.0px;top:702.6px;font-size:17.00px;font-weight:bold;color:#111;letter-spacing:0.46px;">Image Size: 160 X 150</div>
<svg style="left:96px;top:755px" width="130" height="130" viewBox="0 0 130 130"><rect x="3" y="3" width="123" height="123" rx="22" fill="none" stroke="#b4b4b4" stroke-width="4" stroke-dasharray="15 8"/><path d="M54 25H76.5V75H86.5L65 105L44 75H54Z" fill="#b4b4b4"/></svg>
<div class="t " style="left:56.0px;top:897.7px;font-size:24.00px;font-weight:bold;color:#b0b0b0;letter-spacing:-1.12px;">DROP IMAGE HERE</div>
<svg style="left:12px;top:946px" width="26" height="26" viewBox="0 0 26 26"><circle cx="10" cy="10" r="9" fill="#cfe6fa" stroke="#6a8eb8" stroke-width="1.4"/><circle cx="8" cy="7" r="3.5" fill="#fff" opacity="0.6"/><path d="M16.5 16.5L23 23" stroke="#f0902a" stroke-width="4" stroke-linecap="round"/><text x="10" y="13.5" font-size="9.5" font-weight="bold" text-anchor="middle" fill="#111" font-family="Liberation Sans">1:1</text></svg>
<svg style="left:243px;top:949px" width="24" height="24" viewBox="0 0 24 24"><path d="M4 10A8 8 0 0 1 18 6" fill="none" stroke="#3a8ee6" stroke-width="3.2"/><path d="M15 2L21 7L14 9Z" fill="#3a8ee6"/><path d="M19 13A8 8 0 0 1 5 17" fill="none" stroke="#3a8ee6" stroke-width="3.2"/><path d="M8 21L2 16L9 14Z" fill="#3a8ee6"/></svg>
<svg style="left:288px;top:949px" width="24" height="24" viewBox="0 0 24 24"><circle cx="10" cy="10" r="9" fill="#cfe6fa" stroke="#6a8eb8" stroke-width="1.4"/><circle cx="8" cy="7" r="3.5" fill="#fff" opacity="0.6"/><path d="M16.5 16.5L23 23" stroke="#f0902a" stroke-width="4" stroke-linecap="round"/></svg>

<!-- p05_grid.py -->
<div class="t " style="left:348.3px;top:236.3px;font-size:19.75px;font-weight:bold;color:#111;letter-spacing:0.16px;">Products</div>
<div class="a " style="left:336px;top:269px;width:1584px;height:78px;background:#fff"></div>
<div class="a " style="left:339px;top:307px;width:1581px;height:2px;background:#a4a4a4"></div>
<svg style="left:343px;top:276px" width="21" height="20" viewBox="0 0 21 20"><path d="M1 10L10 2V6H20V14H10V18Z" fill="#e8e8e8" stroke="#d4d4d4"/></svg>
<svg style="left:377px;top:284px" width="8" height="5" viewBox="0 0 8 5"><path d="M0 0H8L4 5Z" fill="#666"/></svg>
<svg style="left:401px;top:276px" width="21" height="20" viewBox="0 0 21 20"><path d="M20 10L11 2V6H1V14H11V18Z" fill="#e8e8e8" stroke="#d4d4d4"/></svg>
<svg style="left:434px;top:284px" width="8" height="5" viewBox="0 0 8 5"><path d="M0 0H8L4 5Z" fill="#666"/></svg>
<div class="a " style="left:453px;top:274px;width:2px;height:29px;background:#8c8c8c"></div>
<div class="a " style="left:497px;top:274px;width:2px;height:29px;background:#8c8c8c"></div>
<div class="a " style="left:577px;top:274px;width:2px;height:29px;background:#8c8c8c"></div>
<div class="a " style="left:656px;top:274px;width:2px;height:29px;background:#8c8c8c"></div>
<div class="a " style="left:821px;top:274px;width:2px;height:29px;background:#8c8c8c"></div>
<div class="a " style="left:973px;top:274px;width:2px;height:29px;background:#8c8c8c"></div>
<div class="a " style="left:1016px;top:274px;width:2px;height:29px;background:#8c8c8c"></div>
<div class="a " style="left:1259px;top:274px;width:2px;height:29px;background:#8c8c8c"></div>
<div class="a " style="left:1303px;top:274px;width:2px;height:29px;background:#8c8c8c"></div>
<div class="a " style="left:1346px;top:274px;width:2px;height:29px;background:#8c8c8c"></div>
<div class="a " style="left:1448px;top:274px;width:2px;height:29px;background:#8c8c8c"></div>
<div class="a " style="left:1528px;top:274px;width:2px;height:29px;background:#8c8c8c"></div>
<svg style="left:465px;top:275px" width="22" height="22" viewBox="0 0 22 22"><path d="M4 10A8 8 0 0 1 18 6" fill="none" stroke="#3a8ee6" stroke-width="3.2"/><path d="M15 2L21 7L14 9Z" fill="#3a8ee6"/><path d="M19 13A8 8 0 0 1 5 17" fill="none" stroke="#3a8ee6" stroke-width="3.2"/><path d="M8 21L2 16L9 14Z" fill="#3a8ee6"/></svg>
<svg style="left:508px;top:275px" width="22" height="22" viewBox="0 0 22 22"><path d="M11 1L21 5V17L11 21L1 17V5Z" fill="#c89a28"/><path d="M1 5L11 9L21 5L11 1Z" fill="#f0d070"/><path d="M11 9V21L21 17V5Z" fill="#b88a18"/><path d="M6 3L16 7M16 3L6 7M6 7V19M16 7V19M1 11L11 15L21 11" stroke="#6a5018" stroke-width="0.8" fill="none"/><rect x="12" y="15.5" width="9" height="3.5" fill="#3aa83a"/><rect x="14.75" y="12.75" width="3.5" height="9" fill="#3aa83a"/></svg>
<svg style="left:543px;top:275px" width="22" height="22" viewBox="0 0 22 22"><path d="M11 1L21 5V17L11 21L1 17V5Z" fill="#c89a28"/><path d="M1 5L11 9L21 5L11 1Z" fill="#f0d070"/><path d="M11 9V21L21 17V5Z" fill="#b88a18"/><path d="M6 3L16 7M16 3L6 7M6 7V19M16 7V19M1 11L11 15L21 11" stroke="#6a5018" stroke-width="0.8" fill="none"/><path d="M9 18L19 6L22 9L12 20L8 21Z" fill="#4ac040"/><circle cx="20.5" cy="5" r="2.5" fill="#e04040"/></svg>
<svg style="left:587px;top:275px" width="22" height="22" viewBox="0 0 22 22"><path d="M11 1L21 5V17L11 21L1 17V5Z" fill="#c89a28"/><path d="M1 5L11 9L21 5L11 1Z" fill="#f0d070"/><path d="M11 9V21L21 17V5Z" fill="#b88a18"/><path d="M6 3L16 7M16 3L6 7M6 7V19M16 7V19M1 11L11 15L21 11" stroke="#6a5018" stroke-width="0.8" fill="none"/><path d="M2 14L9 21M9 14L2 21" stroke="#e84a2a" stroke-width="2.6"/></svg>
<svg style="left:623px;top:275px" width="22" height="22" viewBox="0 0 22 22"><path d="M11 1L21 5V17L11 21L1 17V5Z" fill="#c89a28"/><path d="M1 5L11 9L21 5L11 1Z" fill="#f0d070"/><path d="M11 9V21L21 17V5Z" fill="#b88a18"/><path d="M6 3L16 7M16 3L6 7M6 7V19M16 7V19M1 11L11 15L21 11" stroke="#6a5018" stroke-width="0.8" fill="none"/><rect x="11" y="12" width="10" height="10" fill="#e84040"/><path d="M13 14L19 20M19 14L13 20" stroke="#fff" stroke-width="1.8"/></svg>
<svg style="left:666px;top:274px" width="24" height="24" viewBox="0 0 24 24"><g transform="translate(0,9) scale(0.62)"><path d="M11 1L21 5V17L11 21L1 17V5Z" fill="#c89a28"/><path d="M1 5L11 9L21 5L11 1Z" fill="#f0d070"/><path d="M11 9V21L21 17V5Z" fill="#b88a18"/><path d="M6 3L16 7M16 3L6 7M6 7V19M16 7V19M1 11L11 15L21 11" stroke="#6a5018" stroke-width="0.8" fill="none"/></g><g transform="translate(10,9) scale(0.62)"><path d="M11 1L21 5V17L11 21L1 17V5Z" fill="#c89a28"/><path d="M1 5L11 9L21 5L11 1Z" fill="#f0d070"/><path d="M11 9V21L21 17V5Z" fill="#b88a18"/><path d="M6 3L16 7M16 3L6 7M6 7V19M16 7V19M1 11L11 15L21 11" stroke="#6a5018" stroke-width="0.8" fill="none"/></g><g transform="translate(5,0) scale(0.62)"><path d="M11 1L21 5V17L11 21L1 17V5Z" fill="#c89a28"/><path d="M1 5L11 9L21 5L11 1Z" fill="#f0d070"/><path d="M11 9V21L21 17V5Z" fill="#b88a18"/><path d="M6 3L16 7M16 3L6 7M6 7V19M16 7V19M1 11L11 15L21 11" stroke="#6a5018" stroke-width="0.8" fill="none"/></g></svg>
<div class="t " style="left:696.0px;top:278.9px;font-size:17.25px;color:#111;letter-spacing:0.42px;">Multi Editors</div>
<svg style="left:801px;top:284px" width="8" height="5" viewBox="0 0 8 5"><path d="M0 0H8L4 5Z" fill="#111"/></svg>
<svg style="left:832px;top:275px" width="22" height="22" viewBox="0 0 22 22"><rect x="6" y="3" width="14" height="18" fill="#f0f6fc" stroke="#8aa8c8"/><path d="M3 10C3 5 7 3 11 4L11 1L16 6L11 10V7C8 7 6 8 6 11Z" fill="#3ab83a"/><path d="M19 12C19 17 15 19 11 18L11 21L6 16L11 12V15C14 15 16 14 16 11Z" fill="#3ab83a"/></svg>
<svg style="left:868px;top:275px" width="22" height="22" viewBox="0 0 22 22"><g stroke="#999" stroke-width="1.2"><path d="M3 4L11 6L19 4L19 15L11 19L3 15Z M11 6V19" fill="none"/></g><circle cx="3" cy="4" r="2.6" fill="#f04a12"/><circle cx="11" cy="6" r="2.6" fill="#f04a12"/><circle cx="19" cy="4" r="2.6" fill="#f04a12"/><circle cx="3" cy="15" r="2.6" fill="#f04a12"/><circle cx="11" cy="19" r="2.6" fill="#f04a12"/><circle cx="19" cy="15" r="2.6" fill="#f04a12"/><circle cx="11" cy="2" r="2.6" fill="#f04a12"/><path d="M10 14L14 19L22 9" fill="none" stroke="#2a6ad0" stroke-width="2.5"/></svg>
<svg style="left:904px;top:275px" width="22" height="22" viewBox="0 0 22 22"><path d="M2 6H9L11 8H20V19H2Z" fill="#e8c050"/><path d="M2 10H21L19 20H1Z" fill="#f8dc78" stroke="#c8a040" stroke-width="0.8"/><path d="M10 14L14 19L22 9" fill="none" stroke="#2a6ad0" stroke-width="2.5"/></svg>
<svg style="left:939px;top:274px" width="24" height="24" viewBox="0 0 24 24"><rect x="1" y="1" width="22" height="22" rx="3" fill="#4a90e0" stroke="#2a68b8"/><path d="M5 6C8 4 11 8 9 11C7 14 4 12 4 9M13 5C17 6 19 10 17 14C15 18 12 17 13 13C14 10 12 8 13 5M9 15C11 16 12 19 10 20" fill="#9ccaf4" opacity="0.8"/></svg>
<svg style="left:983px;top:275px" width="22" height="22" viewBox="0 0 22 22"><path d="M11 1L21 5V14C21 18 16 21 11 22C6 21 1 18 1 14V5Z" fill="#3a88e0" stroke="#2060b0"/><path d="M1 5L11 9L21 5L11 1Z" fill="#8cc4f4"/><circle cx="11" cy="7" r="3" fill="#f8b030"/></svg>
<svg style="left:1027px;top:275px" width="22" height="22" viewBox="0 0 22 22"><rect x="7" y="1" width="13" height="16" fill="#f4f8fc" stroke="#7a9ac0"/><rect x="1" y="5" width="13" height="16" fill="#e8f0f8" stroke="#7a9ac0"/><rect x="3" y="13" width="9" height="5" fill="#9ab8dc"/></svg>
<svg style="left:1064px;top:275px" width="21" height="22" viewBox="0 0 21 22"><rect x="2" y="4" width="16" height="17" rx="1" fill="#f2f2f2" stroke="#e0e0e0"/><rect x="6" y="1" width="8" height="5" fill="#e8e8e8"/></svg>
<svg style="left:1099px;top:275px" width="22" height="22" viewBox="0 0 22 22"><g transform="translate(0,10) scale(0.55)"><path d="M11 1L21 5V17L11 21L1 17V5Z" fill="#c89a28"/><path d="M1 5L11 9L21 5L11 1Z" fill="#f0d070"/><path d="M11 9V21L21 17V5Z" fill="#b88a18"/><path d="M6 3L16 7M16 3L6 7M6 7V19M16 7V19M1 11L11 15L21 11" stroke="#6a5018" stroke-width="0.8" fill="none"/></g><g transform="translate(10,10) scale(0.55)"><path d="M11 1L21 5V17L11 21L1 17V5Z" fill="#c89a28"/><path d="M1 5L11 9L21 5L11 1Z" fill="#f0d070"/><path d="M11 9V21L21 17V5Z" fill="#b88a18"/><path d="M6 3L16 7M16 3L6 7M6 7V19M16 7V19M1 11L11 15L21 11" stroke="#6a5018" stroke-width="0.8" fill="none"/></g><g transform="translate(5,1) scale(0.55)"><path d="M11 1L21 5V17L11 21L1 17V5Z" fill="#c89a28"/><path d="M1 5L11 9L21 5L11 1Z" fill="#f0d070"/><path d="M11 9V21L21 17V5Z" fill="#b88a18"/><path d="M6 3L16 7M16 3L6 7M6 7V19M16 7V19M1 11L11 15L21 11" stroke="#6a5018" stroke-width="0.8" fill="none"/></g></svg>
<div class="t " style="left:1128.0px;top:278.9px;font-size:17.25px;color:#111;letter-spacing:0.24px;">C<u>l</u>one Products</div>
<svg style="left:1273px;top:275px" width="20" height="22" viewBox="0 0 20 22"><rect x="2" y="1" width="12" height="19" fill="#f4f8fc" stroke="#666"/><rect x="4" y="3" width="8" height="15" fill="#b8d0ec"/><path d="M9 14L13 19L19 10" fill="none" stroke="#2a6ad0" stroke-width="2.4"/></svg>
<svg style="left:1314px;top:275px" width="22" height="22" viewBox="0 0 22 22"><path d="M1 2H19L12 11V19L8 16V11Z" fill="#d8d8d8" stroke="#aaa"/><ellipse cx="10" cy="3" rx="9" ry="2.5" fill="#eee" stroke="#bbb"/><rect x="12" y="15" width="9" height="3.5" fill="#3aa83a"/><rect x="14.75" y="12.25" width="3.5" height="9" fill="#3aa83a"/></svg>
<svg style="left:1357px;top:278px" width="22" height="16" viewBox="0 0 22 16"><ellipse cx="6" cy="10" rx="5" ry="4.5" fill="#b8d4f0" stroke="#888" stroke-width="1.6"/><ellipse cx="16" cy="10" rx="5" ry="4.5" fill="#b8d4f0" stroke="#888" stroke-width="1.6"/><path d="M3 6L8 2M13 2L19 6" stroke="#888" stroke-width="2.2"/></svg>
<div class="t " style="left:1386.0px;top:278.9px;font-size:17.25px;color:#111;letter-spacing:-0.73px;"><u>S</u>earch</div>
<svg style="left:1459px;top:275px" width="22" height="22" viewBox="0 0 22 22"><path d="M5 1L10 9H7V14H3V9H0Z" fill="#f04010"/><path d="M11 4C15 3 18 5 18 9L20 9L16 13L12 9H14C14 7 13 6 11 7Z" fill="#3ac030"/><path d="M11 21C7 22 4 20 4 16L2 16L6 12L10 16H8C8 18 9 19 11 19Z" fill="#3ac030"/><path d="M12 12L17 10L22 13V19L17 22L12 19Z" fill="#3070c8"/></svg>
<svg style="left:1494px;top:275px" width="23" height="22" viewBox="0 0 23 22"><rect x="1" y="1" width="21" height="20" fill="#e8f4e8" stroke="#4a9a4a" stroke-width="1.5"/><path d="M6 5L16 17M16 5L6 17" stroke="#3a9a3a" stroke-width="3.5"/></svg>
<svg style="left:1538px;top:275px" width="23" height="22" viewBox="0 0 23 22"><rect x="1" y="1" width="20" height="17" fill="#f4f8fc" stroke="#4a88d0" stroke-width="1.5"/><path d="M4 5H18" stroke="#f0c040" stroke-width="1.5" stroke-dasharray="2 1"/><path d="M4 9H10M4 13H10" stroke="#8aa8c8"/><rect x="11" y="11" width="11" height="7" fill="#ddd" stroke="#999"/></svg>
<svg style="left:1573px;top:275px" width="25" height="22" viewBox="0 0 25 22"><circle cx="3" cy="3" r="2.2" fill="none" stroke="#7ab848" stroke-width="1.4"/><circle cx="3" cy="11" r="2.2" fill="none" stroke="#7ab848" stroke-width="1.4"/><circle cx="3" cy="19" r="2.2" fill="none" stroke="#7ab848" stroke-width="1.4"/><path d="M13 21V7H9L16 1L23 7H19V21Z" fill="#fff" stroke="#c8c8c8" stroke-width="1.2"/></svg>
<svg style="left:1609px;top:275px" width="25" height="22" viewBox="0 0 25 22"><circle cx="3" cy="3" r="2.2" fill="none" stroke="#7ab848" stroke-width="1.4"/><circle cx="3" cy="11" r="2.2" fill="none" stroke="#7ab848" stroke-width="1.4"/><circle cx="3" cy="19" r="2.2" fill="none" stroke="#7ab848" stroke-width="1.4"/><path d="M13 1V15H9L16 21L23 15H19V1Z" fill="#fff" stroke="#c8c8c8" stroke-width="1.2"/></svg>
<div class="t " style="left:345.0px;top:321.6px;font-size:17.25px;color:#111;letter-spacing:0.03px;">Filter</div>
<div class="t " style="left:396.0px;top:321.6px;font-size:17.25px;color:#111;letter-spacing:0.30px;">Show products from selected category</div>
<div class="a " style="left:835px;top:315px;width:26px;height:30px;background:#e3e3e3;border:1px solid #adadad"></div>
<svg style="left:841px;top:326px" width="14" height="8" viewBox="0 0 14 8"><path d="M1 1L7 7L13 1" fill="none" stroke="#555" stroke-width="1.4"/></svg>
<svg style="left:869px;top:318px" width="22" height="22" viewBox="0 0 22 22"><path d="M1 2H19L12 11V19L8 16V11Z" fill="#eaeaea" stroke="#ddd"/></svg>
<div class="a " style="left:902px;top:315px;width:2px;height:30px;background:#8c8c8c"></div>
<div class="a " style="left:912px;top:319px;width:20px;height:20px;background:#fff;border:1.5px solid #333"></div>
<div class="t " style="left:935.0px;top:321.6px;font-size:17.25px;color:#111;letter-spacing:-0.47px;">Show parent products only</div>
<div class="a " style="left:1180px;top:315px;width:2px;height:30px;background:#8c8c8c"></div>
<svg style="left:1190px;top:319px" width="22" height="20" viewBox="0 0 22 20"><ellipse cx="9" cy="9" rx="8" ry="6" fill="#ddd" stroke="#aaa" transform="rotate(20 9 9)"/><path d="M8 13L13 18M13 11L18 16" stroke="#e0b030" stroke-width="3" stroke-linecap="round"/></svg>
<div class="t " style="left:1220.0px;top:321.6px;font-size:17.25px;color:#111;letter-spacing:0.30px;">Addons</div>
<svg style="left:1284px;top:327px" width="8" height="5" viewBox="0 0 8 5"><path d="M0 0H8L4 5Z" fill="#111"/></svg>
<div class="a " style="left:1306px;top:315px;width:2px;height:30px;background:#8c8c8c"></div>
<svg style="left:1316px;top:319px" width="21" height="22" viewBox="0 0 21 22"><path d="M1 4L4 1M1 4L4 7M1 4H8M20 4L17 1M20 4L17 7M20 4H13" stroke="#2a64b8" stroke-width="1.6" fill="none"/><path d="M2 21V10H19V21" fill="none" stroke="#333" stroke-width="1.6"/></svg>
<div class="a " style="left:1346px;top:312px;width:35px;height:34px;background:#cde6f8;border:1px solid #9ccaf0"></div>
<svg style="left:1354px;top:320px" width="20" height="20" viewBox="0 0 20 20"><rect x="2" y="2" width="16" height="16" fill="none" stroke="#1a4ca0" stroke-width="1.8"/><path d="M0 2H4M2 0V4M16 2H20M18 0V4M0 18H4M2 16V20M16 18H20M18 16V20" stroke="#1a4ca0" stroke-width="1.4"/><circle cx="10" cy="10" r="4.5" fill="none" stroke="#f0a020" stroke-width="2.5"/></svg>
<svg style="left:1390px;top:319px" width="20" height="22" viewBox="0 0 20 22"><path d="M1 1H13L19 7V21H1Z" fill="#f4f6f8" stroke="#b8c4d0"/><circle cx="10" cy="12" r="4" fill="#d0dae4"/></svg>
<div class="t " style="left:1418.0px;top:321.6px;font-size:17.25px;color:#111;letter-spacing:0.13px;">Customize View</div>
<svg style="left:1547px;top:327px" width="8" height="5" viewBox="0 0 8 5"><path d="M0 0H8L4 5Z" fill="#111"/></svg>
<div class="t " style="left:340.0px;top:358.6px;font-size:17.00px;color:#111;letter-spacing:-1.52px;">View</div>
<div class="a " style="left:381px;top:353px;width:64px;height:31px;background:#e3e3e3;border:1px solid #adadad"></div>
<div class="t " style="left:385.0px;top:360.6px;font-size:17.00px;color:#111;letter-spacing:-3.12px;">ALL</div>
<svg style="left:425px;top:364px" width="14" height="8" viewBox="0 0 14 8"><path d="M1 1L7 7L13 1" fill="none" stroke="#555" stroke-width="1.4"/></svg>
<div class="t " style="left:449.0px;top:358.6px;font-size:17.00px;color:#111;letter-spacing:-0.58px;">per page</div>
<div class="a " style="left:522px;top:353px;width:2px;height:31px;background:#9a9a9a"></div>
<div class="t " style="left:527.0px;top:358.6px;font-size:17.00px;color:#a8a8a8;letter-spacing:-1.23px;">Page</div>
<svg style="left:576px;top:358px" width="21" height="21" viewBox="0 0 21 21"><rect x="1" y="1" width="4" height="19" fill="#a8a8a8"/><path d="M19 1L10 10.5L19 20" fill="none" stroke="#a8a8a8" stroke-width="4"/></svg>
<svg style="left:614px;top:358px" width="17" height="21" viewBox="0 0 17 21"><path d="M15 1L5 10.5L15 20" fill="none" stroke="#a8a8a8" stroke-width="4"/></svg>
<div class="a " style="left:642px;top:353px;width:55px;height:31px;background:#fff;border:1px solid #d0d0d0"></div>
<div class="t " style="left:646.0px;top:360.6px;font-size:17.00px;color:#b0b0b0;">0</div>
<svg style="left:710px;top:358px" width="17" height="21" viewBox="0 0 17 21"><path d="M2 1L12 10.5L2 20" fill="none" stroke="#a8a8a8" stroke-width="4"/></svg>
<svg style="left:744px;top:358px" width="21" height="21" viewBox="0 0 21 21"><rect x="16" y="1" width="4" height="19" fill="#a8a8a8"/><path d="M2 1L11 10.5L2 20" fill="none" stroke="#a8a8a8" stroke-width="4"/></svg>
<div class="t " style="left:773.0px;top:358.6px;font-size:17.00px;color:#a8a8a8;letter-spacing:-0.26px;">of 0 pages</div>
<div class="a " style="left:336px;top:389px;width:1558px;height:185px;background:#fff"></div>
<div class="a " style="left:336px;top:417px;width:18px;height:122px;background:#ececec"></div>
<div class="a " style="left:354px;top:457px;width:1540px;height:41px;background:#e9edf2"></div>
<div class="a " style="left:336px;top:456px;width:18px;height:1px;background:#c8c8c8"></div>
<div class="a " style="left:336px;top:497px;width:18px;height:1px;background:#c8c8c8"></div>
<div class="a " style="left:353px;top:389px;width:1px;height:28px;background:#e2e2e2"></div>
<div class="a " style="left:353px;top:417px;width:2px;height:122px;background:#9c9c9c"></div>
<div class="a " style="left:429px;top:389px;width:1px;height:28px;background:#e2e2e2"></div>
<div class="a " style="left:429px;top:417px;width:2px;height:122px;background:#9c9c9c"></div>
<div class="a " style="left:516px;top:389px;width:1px;height:28px;background:#e2e2e2"></div>
<div class="a " style="left:516px;top:417px;width:2px;height:122px;background:#9c9c9c"></div>
<div class="a " style="left:648px;top:389px;width:1px;height:28px;background:#e2e2e2"></div>
<div class="a " style="left:648px;top:417px;width:2px;height:122px;background:#9c9c9c"></div>
<div class="a " style="left:773px;top:389px;width:1px;height:28px;background:#e2e2e2"></div>
<div class="a " style="left:773px;top:417px;width:2px;height:122px;background:#9c9c9c"></div>
<div class="a " style="left:919px;top:389px;width:1px;height:28px;background:#e2e2e2"></div>
<div class="a " style="left:919px;top:417px;width:2px;height:122px;background:#9c9c9c"></div>
<div class="a " style="left:1012px;top:389px;width:1px;height:28px;background:#e2e2e2"></div>
<div class="a " style="left:1012px;top:417px;width:2px;height:122px;background:#9c9c9c"></div>
<div class="a " style="left:1128px;top:389px;width:1px;height:28px;background:#e2e2e2"></div>
<div class="a " style="left:1128px;top:417px;width:2px;height:122px;background:#9c9c9c"></div>
<div class="a " style="left:1212px;top:389px;width:1px;height:28px;background:#e2e2e2"></div>
<div class="a " style="left:1212px;top:417px;width:2px;height:122px;background:#9c9c9c"></div>
<div class="a " style="left:1288px;top:389px;width:1px;height:28px;background:#e2e2e2"></div>
<div class="a " style="left:1288px;top:417px;width:2px;height:122px;background:#9c9c9c"></div>
<div class="a " style="left:1411px;top:389px;width:1px;height:28px;background:#e2e2e2"></div>
<div class="a " style="left:1411px;top:417px;width:2px;height:122px;background:#9c9c9c"></div>
<div class="a " style="left:1488px;top:389px;width:1px;height:28px;background:#e2e2e2"></div>
<div class="a " style="left:1488px;top:417px;width:2px;height:122px;background:#9c9c9c"></div>
<div class="a " style="left:1565px;top:389px;width:1px;height:28px;background:#e2e2e2"></div>
<div class="a " style="left:1565px;top:417px;width:2px;height:122px;background:#9c9c9c"></div>
<div class="a " style="left:1642px;top:389px;width:1px;height:28px;background:#e2e2e2"></div>
<div class="a " style="left:1642px;top:417px;width:2px;height:122px;background:#9c9c9c"></div>
<div class="a " style="left:1719px;top:389px;width:1px;height:28px;background:#e2e2e2"></div>
<div class="a " style="left:1719px;top:417px;width:2px;height:122px;background:#9c9c9c"></div>
<div class="a " style="left:1816px;top:389px;width:1px;height:28px;background:#e2e2e2"></div>
<div class="a " style="left:1816px;top:417px;width:2px;height:122px;background:#9c9c9c"></div>
<div class="a " style="left:1893px;top:389px;width:1px;height:28px;background:#e2e2e2"></div>
<div class="a " style="left:1893px;top:417px;width:2px;height:122px;background:#9c9c9c"></div>
<div class="a " style="left:336px;top:538px;width:1558px;height:3px;background:#a8a8a8"></div>
<div class="a " style="left:336px;top:541px;width:1558px;height:33px;background:#efefef;border-bottom:1px solid #c8c8c8"></div>
<div class="a " style="left:353px;top:541px;width:2px;height:33px;background:#c0c0c0"></div>
<div class="a " style="left:518px;top:544px;width:130px;height:27px;border:1px solid #dcdcdc"></div>
<div class="t " style="left:523.0px;top:549.6px;font-size:17.00px;color:#111;letter-spacing:-0.45px;">1 185 products</div>
<svg style="left:340px;top:396px" width="11" height="16" viewBox="0 0 11 16"><path d="M0 1H3M0 5H3M0 9H3M0 13H3M5 1H11M5 5H11M5 9H11M5 13H11" stroke="#111" stroke-width="1.6"/></svg>
<div class="t " style="left:358.0px;top:395.6px;font-size:17.00px;color:#1a2030;letter-spacing:-1.50px;">ID</div>
<div class="t " style="left:434.0px;top:395.6px;font-size:17.00px;color:#1a2030;letter-spacing:0.36px;">Prev...</div>
<div class="t " style="left:548.5px;top:395.6px;font-size:17.00px;color:#1a2030;letter-spacing:-0.60px;">Product</div>
<div class="t " style="left:653.0px;top:395.6px;font-size:17.00px;color:#1a2030;letter-spacing:0.07px;">Attribute Set ...</div>
<div class="t " style="left:778.0px;top:395.6px;font-size:17.00px;color:#1a2030;letter-spacing:-0.62px;">Type</div>
<div class="t " style="left:952.0px;top:395.6px;font-size:17.00px;color:#1a2030;letter-spacing:-0.44px;">Status</div>
<div class="t " style="left:1044.6px;top:395.6px;font-size:17.00px;color:#1a2030;letter-spacing:-0.68px;">Visibility</div>
<div class="t " style="left:1160.0px;top:395.6px;font-size:17.00px;color:#1a2030;letter-spacing:-3.48px;">SKU</div>
<div class="t " style="left:1244.0px;top:395.6px;font-size:17.00px;color:#1a2030;letter-spacing:-1.18px;">Price</div>
<div class="t " style="left:1321.0px;top:395.6px;font-size:17.00px;color:#1a2030;letter-spacing:-0.43px;">Special Pr...</div>
<div class="t " style="left:1444.0px;top:395.6px;font-size:17.00px;color:#1a2030;letter-spacing:-0.22px;">Qty</div>
<div class="t " style="left:1493.0px;top:395.6px;font-size:17.00px;color:#1a2030;letter-spacing:-0.49px;">Created</div>
<div class="t " style="left:1571.0px;top:395.6px;font-size:17.00px;color:#1a2030;letter-spacing:0.01px;">Last u...</div>
<div class="t " style="left:1675.0px;top:395.6px;font-size:17.00px;color:#1a2030;letter-spacing:-0.24px;">Po...</div>
<div class="t " style="left:1724.0px;top:395.6px;font-size:17.00px;color:#1a2030;letter-spacing:0.10px;">Stock Av...</div>
<div class="t " style="left:1822.0px;top:395.6px;font-size:17.00px;color:#1a2030;letter-spacing:-0.32px;">Weight</div>
<svg style="left:497px;top:397px" width="11" height="11" viewBox="0 0 11 11"><path d="M1 1H10L5.5 10Z" fill="none" stroke="#777" stroke-width="1"/></svg>
<svg style="left:524px;top:393px" width="22" height="22" viewBox="0 0 22 22"><g transform="translate(1.5,20.5) rotate(-45)"><path d="M0 0L4 -2.4H24V2.4H4Z" fill="#1f68d8"/><path d="M4 -2.4H24V-0.6H4Z" fill="#6aa8f0"/><path d="M0 0L4 -2.4V2.4Z" fill="#e8c060"/><rect x="11" y="-2.6" width="2" height="5.2" fill="#555"/><rect x="24" y="-2.4" width="4" height="4.8" rx="1" fill="#c8c8c8"/></g></svg>
<svg style="left:927px;top:393px" width="22" height="22" viewBox="0 0 22 22"><g transform="translate(1.5,20.5) rotate(-45)"><path d="M0 0L4 -2.4H24V2.4H4Z" fill="#1f68d8"/><path d="M4 -2.4H24V-0.6H4Z" fill="#6aa8f0"/><path d="M0 0L4 -2.4V2.4Z" fill="#e8c060"/><rect x="11" y="-2.6" width="2" height="5.2" fill="#555"/><rect x="24" y="-2.4" width="4" height="4.8" rx="1" fill="#c8c8c8"/></g></svg>
<svg style="left:1020px;top:393px" width="22" height="22" viewBox="0 0 22 22"><g transform="translate(1.5,20.5) rotate(-45)"><path d="M0 0L4 -2.4H24V2.4H4Z" fill="#1f68d8"/><path d="M4 -2.4H24V-0.6H4Z" fill="#6aa8f0"/><path d="M0 0L4 -2.4V2.4Z" fill="#e8c060"/><rect x="11" y="-2.6" width="2" height="5.2" fill="#555"/><rect x="24" y="-2.4" width="4" height="4.8" rx="1" fill="#c8c8c8"/></g></svg>
<svg style="left:1136px;top:393px" width="22" height="22" viewBox="0 0 22 22"><g transform="translate(1.5,20.5) rotate(-45)"><path d="M0 0L4 -2.4H24V2.4H4Z" fill="#1f68d8"/><path d="M4 -2.4H24V-0.6H4Z" fill="#6aa8f0"/><path d="M0 0L4 -2.4V2.4Z" fill="#e8c060"/><rect x="11" y="-2.6" width="2" height="5.2" fill="#555"/><rect x="24" y="-2.4" width="4" height="4.8" rx="1" fill="#c8c8c8"/></g></svg>
<svg style="left:1220px;top:393px" width="22" height="22" viewBox="0 0 22 22"><g transform="translate(1.5,20.5) rotate(-45)"><path d="M0 0L4 -2.4H24V2.4H4Z" fill="#1f68d8"/><path d="M4 -2.4H24V-0.6H4Z" fill="#6aa8f0"/><path d="M0 0L4 -2.4V2.4Z" fill="#e8c060"/><rect x="11" y="-2.6" width="2" height="5.2" fill="#555"/><rect x="24" y="-2.4" width="4" height="4.8" rx="1" fill="#c8c8c8"/></g></svg>
<svg style="left:1296px;top:393px" width="22" height="22" viewBox="0 0 22 22"><g transform="translate(1.5,20.5) rotate(-45)"><path d="M0 0L4 -2.4H24V2.4H4Z" fill="#1f68d8"/><path d="M4 -2.4H24V-0.6H4Z" fill="#6aa8f0"/><path d="M0 0L4 -2.4V2.4Z" fill="#e8c060"/><rect x="11" y="-2.6" width="2" height="5.2" fill="#555"/><rect x="24" y="-2.4" width="4" height="4.8" rx="1" fill="#c8c8c8"/></g></svg>
<svg style="left:1420px;top:393px" width="22" height="22" viewBox="0 0 22 22"><g transform="translate(1.5,20.5) rotate(-45)"><path d="M0 0L4 -2.4H24V2.4H4Z" fill="#1f68d8"/><path d="M4 -2.4H24V-0.6H4Z" fill="#6aa8f0"/><path d="M0 0L4 -2.4V2.4Z" fill="#e8c060"/><rect x="11" y="-2.6" width="2" height="5.2" fill="#555"/><rect x="24" y="-2.4" width="4" height="4.8" rx="1" fill="#c8c8c8"/></g></svg>
<svg style="left:1650px;top:393px" width="22" height="22" viewBox="0 0 22 22"><g transform="translate(1.5,20.5) rotate(-45)"><path d="M0 0L4 -2.4H24V2.4H4Z" fill="#1f68d8"/><path d="M4 -2.4H24V-0.6H4Z" fill="#6aa8f0"/><path d="M0 0L4 -2.4V2.4Z" fill="#e8c060"/><rect x="11" y="-2.6" width="2" height="5.2" fill="#555"/><rect x="24" y="-2.4" width="4" height="4.8" rx="1" fill="#c8c8c8"/></g></svg>
<svg style="left:463px;top:418.0px" width="22" height="40" viewBox="0 0 22 40"><path d="M1.5 38V16C1.5 12.5 4 11 8 10.5H14C18 11 20.5 12.5 20.5 16V38Z" fill="#5e5e5e"/><path d="M6 37V11.5H16.5V37Z" fill="#e2b060"/><rect x="13.5" y="14" width="3" height="5" fill="#666"/><ellipse cx="11" cy="5.5" rx="3.6" ry="5" fill="#9a6a4a"/><path d="M7.5 4C8 1 14 1 14.5 4Z" fill="#6a4a30"/><rect x="5" y="34" width="12" height="5" fill="#1a1a1a"/></svg>
<div class="t " style="left:356.4px;top:429.6px;font-size:17.00px;color:#111;letter-spacing:-1.41px;">66</div>
<div class="t " style="left:519.8px;top:429.6px;font-size:17.00px;color:#111;letter-spacing:-0.42px;">Chaz Kangero...</div>
<div class="t " style="left:651.7px;top:429.6px;font-size:17.00px;color:#111;letter-spacing:-0.45px;">Top</div>
<div class="t " style="left:776.2px;top:429.6px;font-size:17.00px;color:#111;letter-spacing:-0.76px;">Simple Product</div>
<div class="t " style="left:922.7px;top:429.6px;font-size:17.00px;color:#111;letter-spacing:-0.90px;">Enabled</div>
<div class="t " style="left:1016.5px;top:429.6px;font-size:17.00px;color:#111;letter-spacing:-0.30px;">Not Visible I...</div>
<div class="t " style="left:1131.5px;top:429.6px;font-size:17.00px;color:#111;letter-spacing:-0.56px;">MH01-X...</div>
<div class="t " style="left:1244.0px;top:429.6px;font-size:17.00px;color:#111;letter-spacing:-0.76px;">52,00</div>
<div class="t " style="left:1459.0px;top:429.6px;font-size:17.00px;color:#111;letter-spacing:-1.93px;">100</div>
<div class="t " style="left:1494.0px;top:429.6px;font-size:17.00px;color:#111;letter-spacing:0.20px;">16.01....</div>
<div class="t " style="left:1571.0px;top:429.6px;font-size:17.00px;color:#111;letter-spacing:0.20px;">16.01....</div>
<div class="t " style="left:1648.0px;top:429.6px;font-size:17.00px;color:#111;">1</div>
<div class="t " style="left:1723.0px;top:429.6px;font-size:17.00px;color:#111;letter-spacing:-0.42px;">In Stock</div>
<div class="t " style="left:1822.0px;top:429.6px;font-size:17.00px;color:#111;">1</div>
<div class="a " style="left:458px;top:457px;width:32px;height:41px;background:#fff"></div>
<svg style="left:463px;top:458.5px" width="22" height="40" viewBox="0 0 22 40"><path d="M1.5 38V16C1.5 12.5 4 11 8 10.5H14C18 11 20.5 12.5 20.5 16V38Z" fill="#5e5e5e"/><path d="M6 37V11.5H16.5V37Z" fill="#b4b4b4"/><rect x="13.5" y="14" width="3" height="5" fill="#666"/><ellipse cx="11" cy="5.5" rx="3.6" ry="5" fill="#9a6a4a"/><path d="M7.5 4C8 1 14 1 14.5 4Z" fill="#6a4a30"/><rect x="5" y="34" width="12" height="5" fill="#1a1a1a"/></svg>
<div class="t " style="left:356.4px;top:470.1px;font-size:17.00px;color:#111;letter-spacing:-1.41px;">53</div>
<div class="t " style="left:519.8px;top:470.1px;font-size:17.00px;color:#111;letter-spacing:-0.42px;">Chaz Kangero...</div>
<div class="t " style="left:651.7px;top:470.1px;font-size:17.00px;color:#111;letter-spacing:-0.45px;">Top</div>
<div class="t " style="left:776.2px;top:470.1px;font-size:17.00px;color:#111;letter-spacing:-0.76px;">Simple Product</div>
<div class="t " style="left:922.7px;top:470.1px;font-size:17.00px;color:#111;letter-spacing:-0.90px;">Enabled</div>
<div class="t " style="left:1016.5px;top:470.1px;font-size:17.00px;color:#111;letter-spacing:-0.30px;">Not Visible I...</div>
<div class="t " style="left:1131.5px;top:470.1px;font-size:17.00px;color:#111;letter-spacing:-0.56px;">MH01-X...</div>
<div class="t " style="left:1244.0px;top:470.1px;font-size:17.00px;color:#111;letter-spacing:-0.76px;">52,00</div>
<div class="t " style="left:1459.0px;top:470.1px;font-size:17.00px;color:#111;letter-spacing:-1.93px;">100</div>
<div class="t " style="left:1494.0px;top:470.1px;font-size:17.00px;color:#111;letter-spacing:0.20px;">16.01....</div>
<div class="t " style="left:1571.0px;top:470.1px;font-size:17.00px;color:#111;letter-spacing:0.20px;">16.01....</div>
<div class="t " style="left:1648.0px;top:470.1px;font-size:17.00px;color:#111;">1</div>
<div class="t " style="left:1723.0px;top:470.1px;font-size:17.00px;color:#111;letter-spacing:-0.42px;">In Stock</div>
<div class="t " style="left:1822.0px;top:470.1px;font-size:17.00px;color:#111;">1</div>
<svg style="left:463px;top:499.0px" width="22" height="40" viewBox="0 0 22 40"><path d="M1.5 38V16C1.5 12.5 4 11 8 10.5H14C18 11 20.5 12.5 20.5 16V38Z" fill="#5e5e5e"/><path d="M6 37V11.5H16.5V37Z" fill="#b4b4b4"/><rect x="13.5" y="14" width="3" height="5" fill="#666"/><ellipse cx="11" cy="5.5" rx="3.6" ry="5" fill="#9a6a4a"/><path d="M7.5 4C8 1 14 1 14.5 4Z" fill="#6a4a30"/><rect x="5" y="34" width="12" height="5" fill="#1a1a1a"/></svg>
<div class="t " style="left:356.4px;top:510.6px;font-size:17.00px;color:#111;letter-spacing:-1.41px;">56</div>
<div class="t " style="left:519.8px;top:510.6px;font-size:17.00px;color:#111;letter-spacing:-0.42px;">Chaz Kangero...</div>
<div class="t " style="left:651.7px;top:510.6px;font-size:17.00px;color:#111;letter-spacing:-0.45px;">Top</div>
<div class="t " style="left:776.2px;top:510.6px;font-size:17.00px;color:#111;letter-spacing:-0.76px;">Simple Product</div>
<div class="t " style="left:922.7px;top:510.6px;font-size:17.00px;color:#111;letter-spacing:-0.90px;">Enabled</div>
<div class="t " style="left:1016.5px;top:510.6px;font-size:17.00px;color:#111;letter-spacing:-0.30px;">Not Visible I...</div>
<div class="t " style="left:1131.5px;top:510.6px;font-size:17.00px;color:#111;letter-spacing:-0.56px;">MH01-S...</div>
<div class="t " style="left:1244.0px;top:510.6px;font-size:17.00px;color:#111;letter-spacing:-0.76px;">52,00</div>
<div class="t " style="left:1459.0px;top:510.6px;font-size:17.00px;color:#111;letter-spacing:-1.93px;">100</div>
<div class="t " style="left:1494.0px;top:510.6px;font-size:17.00px;color:#111;letter-spacing:0.20px;">16.01....</div>
<div class="t " style="left:1571.0px;top:510.6px;font-size:17.00px;color:#111;letter-spacing:0.20px;">16.01....</div>
<div class="t " style="left:1648.0px;top:510.6px;font-size:17.00px;color:#111;">1</div>
<div class="t " style="left:1723.0px;top:510.6px;font-size:17.00px;color:#111;letter-spacing:-0.42px;">In Stock</div>
<div class="t " style="left:1822.0px;top:510.6px;font-size:17.00px;color:#111;">1</div>
<div class="a " style="left:1895px;top:389px;width:25px;height:185px;background:#f0f0f0"></div>
<svg style="left:1901px;top:398px" width="13" height="8" viewBox="0 0 13 8"><path d="M1 7L6.5 1.5L12 7" fill="none" stroke="#555" stroke-width="2"/></svg>
<div class="a " style="left:1897px;top:523px;width:21px;height:24px;background:#cdcdcd"></div>
<svg style="left:1901px;top:558px" width="13" height="8" viewBox="0 0 13 8"><path d="M1 1L6.5 6.5L12 1" fill="none" stroke="#555" stroke-width="2"/></svg>

<!-- p06_bottom.py -->
<div class="a " style="left:892px;top:575px;width:474px;height:10px;background:linear-gradient(#fff,#fff 45%,#a8c4e4);border:1px solid #b8cce4;border-radius:5px 5px 0 0"></div>
<svg style="left:1125px;top:576px" width="10" height="6" viewBox="0 0 10 6"><path d="M1 1L5 5L9 1" fill="none" stroke="#111" stroke-width="1.6"/></svg>
<div class="a " style="left:337px;top:587px;width:172px;height:30px;background:linear-gradient(#e4eefa,#dce8f6);border-top:4px solid #1e78d8;border-radius:3px 3px 0 0"></div>
<div class="t " style="left:342.0px;top:595.6px;font-size:17.00px;font-weight:bold;color:#111;letter-spacing:0.32px;">Images And Videos</div>
<div class="a " style="left:511px;top:587px;width:107px;height:29px;background:linear-gradient(#f2f6fb,#dae5f2);border:1px solid #b4bcc8;border-bottom:none;border-radius:4px 4px 0 0"></div>
<div class="t " style="left:518.0px;top:595.6px;font-size:17.00px;font-weight:bold;color:#111;letter-spacing:0.15px;">Description</div>
<div class="a " style="left:621px;top:587px;width:90px;height:29px;background:linear-gradient(#f2f6fb,#dae5f2);border:1px solid #b4bcc8;border-bottom:none;border-radius:4px 4px 0 0"></div>
<div class="t " style="left:627.0px;top:595.6px;font-size:17.00px;font-weight:bold;color:#111;letter-spacing:0.20px;">Tier Price</div>
<div class="a " style="left:714px;top:587px;width:97px;height:29px;background:linear-gradient(#f2f6fb,#dae5f2);border:1px solid #b4bcc8;border-bottom:none;border-radius:4px 4px 0 0"></div>
<div class="t " style="left:720.0px;top:595.6px;font-size:17.00px;font-weight:bold;color:#111;letter-spacing:1.06px;">Inventory</div>
<div class="a " style="left:813px;top:587px;width:89px;height:29px;background:linear-gradient(#f2f6fb,#dae5f2);border:1px solid #b4bcc8;border-bottom:none;border-radius:4px 4px 0 0"></div>
<div class="t " style="left:819.0px;top:595.6px;font-size:17.00px;font-weight:bold;color:#111;letter-spacing:0.53px;">Websites</div>
<div class="a " style="left:904px;top:587px;width:103px;height:29px;background:linear-gradient(#f2f6fb,#dae5f2);border:1px solid #b4bcc8;border-bottom:none;border-radius:4px 4px 0 0"></div>
<div class="t " style="left:910.4px;top:595.6px;font-size:17.00px;font-weight:bold;color:#111;letter-spacing:0.38px;">Categories</div>
<div class="a " style="left:1010px;top:587px;width:156px;height:29px;background:linear-gradient(#f2f6fb,#dae5f2);border:1px solid #b4bcc8;border-bottom:none;border-radius:4px 4px 0 0"></div>
<div class="t " style="left:1016.0px;top:595.6px;font-size:17.00px;font-weight:bold;color:#111;letter-spacing:0.28px;">Related Products</div>
<div class="a " style="left:1169px;top:587px;width:78px;height:29px;background:linear-gradient(#f2f6fb,#dae5f2);border:1px solid #b4bcc8;border-bottom:none;border-radius:4px 4px 0 0"></div>
<div class="t " style="left:1175.0px;top:595.6px;font-size:17.00px;font-weight:bold;color:#111;letter-spacing:-0.02px;">Up-sells</div>
<div class="a " style="left:1251px;top:587px;width:101px;height:29px;background:linear-gradient(#f2f6fb,#dae5f2);border:1px solid #b4bcc8;border-bottom:none;border-radius:4px 4px 0 0"></div>
<div class="t " style="left:1256.0px;top:595.6px;font-size:17.00px;font-weight:bold;color:#111;letter-spacing:-0.16px;">Cross-sells</div>
<div class="a " style="left:1355px;top:587px;width:152px;height:29px;background:linear-gradient(#f2f6fb,#dae5f2);border:1px solid #b4bcc8;border-bottom:none;border-radius:4px 4px 0 0"></div>
<div class="t " style="left:1361.0px;top:595.6px;font-size:17.00px;font-weight:bold;color:#111;letter-spacing:0.22px;">Product Reviews</div>
<div class="a " style="left:1510px;top:587px;width:144px;height:29px;background:linear-gradient(#f2f6fb,#dae5f2);border:1px solid #b4bcc8;border-bottom:none;border-radius:4px 4px 0 0"></div>
<div class="t " style="left:1515.0px;top:595.6px;font-size:17.00px;font-weight:bold;color:#111;letter-spacing:0.11px;">Custom Options</div>
<div class="a " style="left:336px;top:616px;width:1584px;height:1px;background:#c8d0da"></div>
<div class="a " style="left:336px;top:617px;width:996px;height:368px;background:#fff"></div>
<svg style="left:352px;top:633px" width="18" height="17" viewBox="0 0 18 17"><rect x="1" y="1" width="13" height="10" fill="#8ab8e8" stroke="#4a80c0"/><path d="M3 8L6 5L9 8" stroke="#fff" fill="none"/><rect x="8" y="11" width="10" height="3.5" fill="#4ab84a"/><rect x="11.25" y="7.75" width="3.5" height="10" fill="#4ab84a"/></svg>
<div class="t " style="left:376.4px;top:630.9px;font-size:17.25px;color:#111;letter-spacing:0.45px;">Add Image</div>
<svg style="left:481px;top:633px" width="18" height="17" viewBox="0 0 18 17"><rect x="1" y="1" width="13" height="10" fill="#8ab8e8" stroke="#4a80c0"/><path d="M3 8L6 5L9 8" stroke="#fff" fill="none"/><rect x="8" y="11" width="10" height="3.5" fill="#4ab84a"/><rect x="11.25" y="7.75" width="3.5" height="10" fill="#4ab84a"/></svg>
<div class="t " style="left:506.0px;top:630.9px;font-size:17.25px;color:#111;letter-spacing:0.34px;">Add Video</div>
<div class="a " style="left:597px;top:625px;width:2px;height:29px;background:#8c8c8c"></div>
<svg style="left:608px;top:627px" width="22" height="22" viewBox="0 0 22 22"><rect x="2" y="4" width="14" height="17" fill="#f4f6fa" stroke="#8a9ab0"/><path d="M5 8H13M5 12H11M5 16H13" stroke="#c8d0dc"/><path d="M9 16L18 5L21 8L12 18L8 19Z" fill="#4ac040"/><circle cx="20" cy="4" r="2.5" fill="#e04040"/></svg>
<div class="t " style="left:638.0px;top:630.9px;font-size:17.25px;color:#111;letter-spacing:0.06px;">Edit Image</div>
<svg style="left:735px;top:627px" width="21" height="22" viewBox="0 0 21 22"><rect x="2" y="4" width="14" height="17" fill="#f8f8f8" stroke="#dcdcdc"/><path d="M9 16L18 5L21 8L12 18L8 19Z" fill="#e8e8e8" stroke="#d8d8d8"/></svg>
<div class="t " style="left:763.0px;top:630.9px;font-size:17.25px;color:#a8a8a8;letter-spacing:0.08px;">Edit Video</div>
<svg style="left:856px;top:634px" width="19" height="18" viewBox="0 0 19 18"><rect x="5" y="2" width="13" height="9" fill="#5a9ae0" stroke="#3a70b8"/><path d="M1 10L8 17M8 10L1 17" stroke="#e84a2a" stroke-width="2.6"/></svg>
<div class="t " style="left:885.2px;top:630.9px;font-size:17.25px;color:#111;letter-spacing:-0.17px;">Delete</div>
<svg style="left:948px;top:629px" width="21" height="21" viewBox="0 0 21 21"><path d="M1 2H17L20 5V20H1Z" fill="#3a78d0" stroke="#2a58a0"/><rect x="5" y="2" width="10" height="6" fill="#e8f0f8"/><rect x="4" y="12" width="13" height="8" fill="#c8dcf4"/></svg>
<div class="t " style="left:977.4px;top:630.9px;font-size:17.25px;color:#111;letter-spacing:0.32px;">Download Image</div>
<div class="a " style="left:1121px;top:625px;width:2px;height:29px;background:#8c8c8c"></div>
<svg style="left:1131px;top:628px" width="23" height="22" viewBox="0 0 23 22"><rect x="3" y="4" width="17" height="14" fill="#e8f2fc" stroke="#4a88d0" stroke-width="1.4"/><rect x="6" y="7" width="11" height="8" fill="#a8c8ec"/><path d="M1 3V1H4M19 1H22V3M1 19V21H4M22 19V21H19" stroke="#4a88d0" stroke-width="1.4" fill="none"/></svg>
<div class="t " style="left:1161.5px;top:630.9px;font-size:17.25px;color:#111;letter-spacing:-0.64px;">Set Resize Rule</div>
<svg style="left:1315px;top:627px" width="13" height="9" viewBox="0 0 13 9"><path d="M1 1L5 4.5L1 8M7 1L11 4.5L7 8" fill="none" stroke="#111" stroke-width="1.8"/></svg>
<svg style="left:1318px;top:647px" width="9" height="5" viewBox="0 0 9 5"><path d="M0 0H9L4.5 5Z" fill="#111"/></svg>
<div class="a " style="left:337px;top:659px;width:995px;height:1px;border-top:1px dotted #d4d4d4"></div>
<svg style="left:340px;top:667px" width="11" height="16" viewBox="0 0 11 16"><path d="M0 1H3M0 5H3M0 9H3M0 13H3M5 1H11M5 5H11M5 9H11M5 13H11" stroke="#111" stroke-width="1.6"/></svg>
<div class="a " style="left:354px;top:660px;width:1px;height:28px;background:#e2e2e2"></div>
<div class="a " style="left:415px;top:660px;width:1px;height:28px;background:#e2e2e2"></div>
<div class="a " style="left:463px;top:660px;width:1px;height:28px;background:#e2e2e2"></div>
<div class="a " style="left:757px;top:660px;width:1px;height:28px;background:#e2e2e2"></div>
<div class="a " style="left:914px;top:660px;width:1px;height:28px;background:#e2e2e2"></div>
<div class="a " style="left:996px;top:660px;width:1px;height:28px;background:#e2e2e2"></div>
<div class="a " style="left:1079px;top:660px;width:1px;height:28px;background:#e2e2e2"></div>
<div class="a " style="left:1162px;top:660px;width:1px;height:28px;background:#e2e2e2"></div>
<div class="a " style="left:1245px;top:660px;width:1px;height:28px;background:#e2e2e2"></div>
<div class="a" style="left:355px;top:660px;width:58px;height:28px;overflow:hidden"><div class="t " style="left:4.0px;top:5.6px;font-size:17.00px;color:#1a2030;letter-spacing:-0.50px;">Position</div>
</div><svg style="left:429px;top:665px" width="23" height="20" viewBox="0 0 23 20"><rect x="0.5" y="0.5" width="22" height="18" fill="#fff" stroke="#555"/><circle cx="6" cy="5.5" r="2.5" fill="none" stroke="#f0a020" stroke-width="1.3"/><path d="M3 15L9 9L13 12L20 5" fill="none" stroke="#a8c0dc" stroke-width="1.3"/></svg>
<div class="t " style="left:468.0px;top:666.1px;font-size:17.00px;color:#1a2030;letter-spacing:-1.06px;">File Name</div>
<div class="t " style="left:762.0px;top:666.1px;font-size:17.00px;color:#1a2030;letter-spacing:-0.90px;">Label</div>
<div class="t " style="left:918.4px;top:666.1px;font-size:17.00px;color:#1a2030;letter-spacing:-1.58px;">Base</div>
<div class="t " style="left:1001.0px;top:666.1px;font-size:17.00px;color:#1a2030;letter-spacing:-1.63px;">Small</div>
<div class="t " style="left:1086.0px;top:666.1px;font-size:17.00px;color:#1a2030;letter-spacing:-1.05px;">Thumbnail</div>
<div class="t " style="left:1168.0px;top:666.1px;font-size:17.00px;color:#1a2030;letter-spacing:-0.75px;">Swatch</div>
<div class="t " style="left:1250.0px;top:666.1px;font-size:17.00px;color:#1a2030;letter-spacing:-0.91px;">Exclude</div>
<div class="a " style="left:355px;top:688px;width:977px;height:28px;background:#a4c3ea;border-top:2px solid #6e4a2e;border-bottom:2px solid #6e4a2e;border-right:2px solid #6e4a2e"></div>
<div class="a " style="left:355px;top:688px;width:62px;height:28px;background:#e8ecf2;border:2.5px solid #111"></div>
<div class="t " style="left:361.0px;top:693.1px;font-size:17.00px;color:#111;">1</div>
<svg style="left:342px;top:694px" width="9" height="15" viewBox="0 0 9 15"><path d="M1 1L8 7.5L1 14Z" fill="none" stroke="#111" stroke-width="1.4"/><path d="M1 7.5H6" stroke="#111" stroke-dasharray="1 1"/></svg>
<svg style="left:429px;top:694px" width="23" height="17" viewBox="0 0 23 17"><path d="M1 4H6L8 1H15L17 4H22V16H1Z" fill="#111"/><circle cx="11.5" cy="10" r="4.5" fill="#fff"/><circle cx="11.5" cy="10" r="2.8" fill="#111"/></svg>
<div class="t " style="left:468.0px;top:692.8px;font-size:18.00px;font-weight:bold;color:#111;letter-spacing:0.56px;">/m/h/mh01-black_main.jpg</div>
<svg style="left:947px;top:692px" width="19" height="19" viewBox="0 0 19 19"><rect x="0.75" y="0.75" width="17.5" height="17.5" fill="#fff" stroke="#444" stroke-width="1.5"/><path d="M3 9L7.5 13.5L15 5" fill="none" stroke="#333" stroke-width="1.6"/></svg>
<svg style="left:1029px;top:692px" width="19" height="19" viewBox="0 0 19 19"><rect x="0.75" y="0.75" width="17.5" height="17.5" fill="#fff" stroke="#444" stroke-width="1.5"/><path d="M3 9L7.5 13.5L15 5" fill="none" stroke="#333" stroke-width="1.6"/></svg>
<svg style="left:1113px;top:692px" width="19" height="19" viewBox="0 0 19 19"><rect x="0.75" y="0.75" width="17.5" height="17.5" fill="#fff" stroke="#444" stroke-width="1.5"/><path d="M3 9L7.5 13.5L15 5" fill="none" stroke="#333" stroke-width="1.6"/></svg>
<svg style="left:1196px;top:692px" width="19" height="19" viewBox="0 0 19 19"><rect x="0.75" y="0.75" width="17.5" height="17.5" fill="#fff" stroke="#444" stroke-width="1.5"/></svg>
<svg style="left:1280px;top:692px" width="19" height="19" viewBox="0 0 19 19"><rect x="0.75" y="0.75" width="17.5" height="17.5" fill="#fff" stroke="#444" stroke-width="1.5"/></svg>
<div class="a " style="left:336px;top:949px;width:996px;height:36px;background:#efefef;border-top:2px solid #a8a8a8"></div>
<div class="a " style="left:353px;top:951px;width:2px;height:34px;background:#c0c0c0"></div>
<div class="a " style="left:467px;top:953px;width:290px;height:28px;border:1px solid #dcdcdc"></div>
<div class="t " style="left:472.0px;top:959.6px;font-size:17.00px;color:#111;letter-spacing:-0.73px;">1 records</div>
<div class="a " style="left:1332px;top:617px;width:13px;height:368px;background:#d6e4f3"></div>
<div class="a " style="left:1333px;top:747px;width:10px;height:110px;background:linear-gradient(90deg,#fff,#fff 45%,#a8c4e4);border:1px solid #a4a4a4;border-radius:5px"></div>
<svg style="left:1335px;top:797px" width="6" height="10" viewBox="0 0 6 10"><path d="M1 1L5 5L1 9" fill="none" stroke="#111" stroke-width="1.6"/></svg>
<div class="a " style="left:324px;top:231px;width:12px;height:754px;background:#d6e4f3"></div>
<div class="a " style="left:326px;top:496px;width:10px;height:224px;background:linear-gradient(90deg,#fff,#fff 40%,#a8c4e4);border:1px solid #a4a4a4;border-radius:5px"></div>
<svg style="left:328px;top:603px" width="6" height="10" viewBox="0 0 6 10"><path d="M5 1L1 5L5 9" fill="none" stroke="#111" stroke-width="1.6"/></svg>
<div class="a " style="left:1345px;top:619px;width:573px;height:366px;background:#fff;border-bottom:1px solid #c8d4e0"></div>
<div class="a " style="left:1345px;top:619px;width:573px;height:363px;background-color:#fff;background-image:linear-gradient(45deg,#c3c3c3 25%,transparent 25%,transparent 75%,#c3c3c3 75%),linear-gradient(45deg,#c3c3c3 25%,transparent 25%,transparent 75%,#c3c3c3 75%);background-size:24px 24px;background-position:12px 0,24px 12px;"></div>
<div class="a " style="left:1485px;top:619px;width:292px;height:364px;background:#fff"></div>
<div class="a " style="left:1344px;top:618px;width:1px;height:367px;background:#a8a8a8"></div>
<svg style="left:1485px;top:619px" width="292" height="364" viewBox="0 0 292 364"><path d="M72 118C62 122 57 140 57 172C55 230 53 280 54 318L93 318C91 260 89 180 87 118Z" fill="#6c6c6c"/><path d="M212 104C224 110 232 130 234 172C236 230 238 280 237 318L200 314C202 260 204 180 206 110Z" fill="#6c6c6c"/><path d="M72 118L87 104L116 104L142 138L168 100L212 104L214 318L80 318Z" fill="#1e1e1e"/><path d="M118 60L166 60L166 112L142 140L118 112Z" fill="#b07a5c"/><path d="M87 104C95 96 106 92 116 92L142 138L168 88C182 90 202 96 212 104L205 118L172 128L150 130L142 140L130 128L110 126L92 122Z" fill="#6e6e6e"/><path d="M116 97L142 140L168 92L168 100L142 148L116 103Z" fill="#5a5a5a"/><rect x="136" y="140" width="8" height="35" fill="#6a6a6a"/><rect x="162" y="143" width="33" height="42" rx="5" fill="#6a6a6a"/><path d="M104 122V216M178 122V192" stroke="#777" stroke-width="2.2"/><path d="M80 316H219L217 364H84Z" fill="#161616"/><path d="M58 314C62 330 72 342 92 344L98 332L92 316Z M238 314C234 330 224 340 205 342L198 330L204 314Z" fill="#a06a50"/><path d="M112 30C112 12 125 6 140 6C158 6 167 18 167 35L168 50C171 55 169 65 164 68C161 80 151 88 136 88C121 88 111 78 108 62C105 50 108 40 112 30Z" fill="#b07a5c"/><path d="M112 30C113 12 126 6 140 6C157 6 166 17 167 36C160 27 150 22 136 23C125 24 117 27 112 32Z" fill="#7a5a48"/><path d="M118 64C124 67 130 67 135 64" stroke="#f4e8e0" stroke-width="2.2" fill="none"/><path d="M116 42C120 40 126 40 130 42M142 42C146 40 152 41 155 44" stroke="#4a3020" stroke-width="2" fill="none"/></svg>
<div class="t " style="left:1356.0px;top:633.2px;font-size:17.50px;font-weight:bold;color:#111;letter-spacing:0.30px;">Image Size: 1274 X 1580</div>
<svg style="left:1355px;top:944px" width="26" height="26" viewBox="0 0 26 26"><circle cx="10" cy="10" r="8.5" fill="#d8ecfc" stroke="#5a8ac0" stroke-width="1.5"/><circle cx="8" cy="7" r="3" fill="#fff" opacity="0.7"/><path d="M16 16L23 23" stroke="#f08a2a" stroke-width="3.5" stroke-linecap="round"/><text x="10" y="13.5" font-size="9" font-weight="bold" text-anchor="middle" fill="#113" font-family="Liberation Sans">1:1</text></svg>
<svg style="left:1838px;top:946px" width="24" height="24" viewBox="0 0 24 24"><path d="M4 10A8 8 0 0 1 18 6" fill="none" stroke="#3a8ee6" stroke-width="3.2"/><path d="M15 2L21 7L14 9Z" fill="#3a8ee6"/><path d="M19 13A8 8 0 0 1 5 17" fill="none" stroke="#3a8ee6" stroke-width="3.2"/><path d="M8 21L2 16L9 14Z" fill="#3a8ee6"/></svg>
<svg style="left:1880px;top:946px" width="26" height="26" viewBox="0 0 26 26"><circle cx="10" cy="10" r="8.5" fill="#d8ecfc" stroke="#5a8ac0" stroke-width="1.5"/><circle cx="8" cy="7" r="3" fill="#fff" opacity="0.7"/><path d="M16 16L23 23" stroke="#f08a2a" stroke-width="3.5" stroke-linecap="round"/></svg>
<div class="a " style="left:0px;top:984px;width:1920px;height:36px;background:linear-gradient(#8a9cb2 0,#94aac6 3px,#e8f2fc 3px,#e4eef9 5px,#d2e0ee 12px,#c4d4e6 22px,#b6c8dc 100%)"></div>
<div class="t " style="left:2.0px;top:994.4px;font-size:17.25px;color:#1a2a40;letter-spacing:-0.45px;">alexey-beta.dev.firebearstudio.com_ (Cloud):Embedded:cloud_a</div>
<div class="a " style="left:473px;top:988px;width:1px;height:30px;background:#a8b8cc;box-shadow:1px 0 0 #f0f6fc"></div>
<div class="a " style="left:1067px;top:988px;width:1px;height:30px;background:#a8b8cc;box-shadow:1px 0 0 #f0f6fc"></div>
<div class="a " style="left:1426px;top:988px;width:1px;height:30px;background:#a8b8cc;box-shadow:1px 0 0 #f0f6fc"></div>
<div class="a " style="left:1669px;top:988px;width:1px;height:30px;background:#a8b8cc;box-shadow:1px 0 0 #f0f6fc"></div>
<div class="a " style="left:1870px;top:988px;width:1px;height:30px;background:#a8b8cc;box-shadow:1px 0 0 #f0f6fc"></div>
<div class="t " style="left:496.7px;top:994.6px;font-size:17.00px;font-weight:bold;color:#189410;letter-spacing:0.18px;">Bridge is enabled. Chunk count: 14 Last GET: 30.01.2018 17:37:01.</div>
<div class="t " style="left:1695.0px;top:994.4px;font-size:17.25px;color:#22a022;letter-spacing:-0.73px;">DB connection available</div>
<div class="a " style="left:1880px;top:996px;width:27px;height:12px;background:linear-gradient(#30e030,#10a010);border:1px solid #0a6a0a"></div>

</body></html>
